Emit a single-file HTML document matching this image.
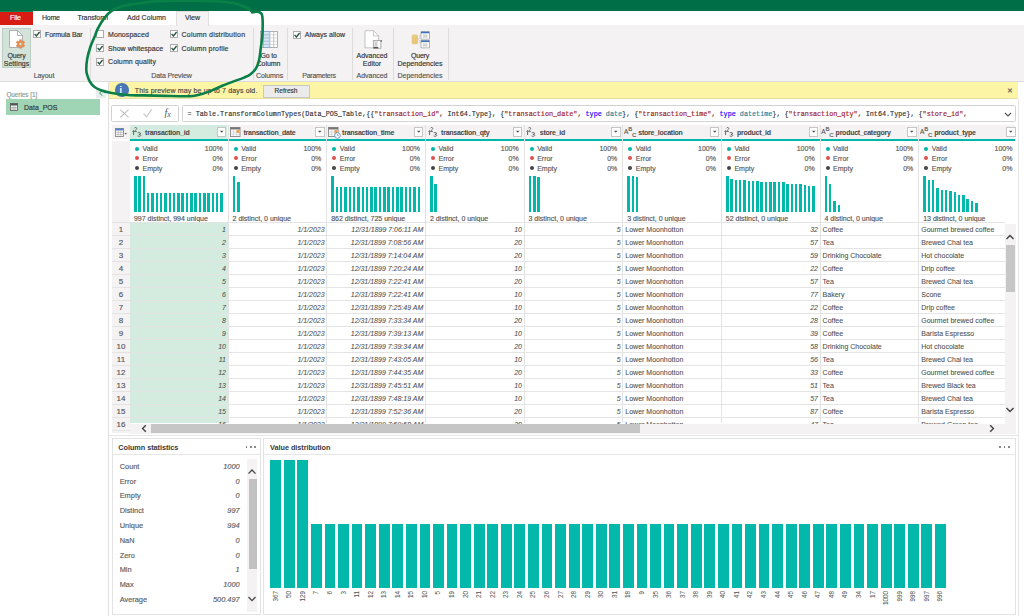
<!DOCTYPE html><html><head><meta charset="utf-8"><style>
*{margin:0;padding:0;box-sizing:border-box}
html,body{width:1024px;height:616px;overflow:hidden;background:#fff;font-family:"Liberation Sans",sans-serif;color:#333}
.ab{position:absolute}
.t{position:absolute;white-space:nowrap;line-height:1;-webkit-text-stroke:0.15px currentColor}
</style></head><body>
<div class="ab" style="left:0;top:0;width:1024px;height:616px;overflow:hidden">
<div class="ab" style="left:0;top:0;width:1024px;height:11px;background:#006e47"></div><div class="ab" style="left:0;top:11px;width:33px;height:1px;background:#0f8352"></div><div class="ab" style="left:33px;top:11px;width:991px;height:14px;background:#fff"></div><div class="ab" style="left:0;top:12px;width:33px;height:12.6px;background:#d71c14"></div><div class="t" style="left:10px;top:14.30px;font-size:7px;color:#fff;font-weight:normal;font-style:normal;letter-spacing:-0.094px;">File</div><div class="t" style="left:42px;top:14.30px;font-size:7px;color:#333;font-weight:normal;font-style:normal;letter-spacing:-0.229px;">Home</div><div class="t" style="left:77.5px;top:14.30px;font-size:7px;color:#333;font-weight:normal;font-style:normal;letter-spacing:-0.118px;">Transform</div><div class="t" style="left:127px;top:14.30px;font-size:7px;color:#333;font-weight:normal;font-style:normal;letter-spacing:0.052px;">Add Column</div><div class="ab" style="left:0;top:25px;width:1024px;height:57px;background:#f4f2f3;border-bottom:1px solid #dcdcdc"></div><div class="ab" style="left:176px;top:11px;width:33px;height:15px;background:#f4f2f3;border:1px solid #e1dfdd;border-bottom:none"></div><div class="t" style="left:185px;top:14.30px;font-size:7px;color:#333;font-weight:normal;font-style:normal;">View</div><div class="ab" style="left:2px;top:28px;width:29px;height:40px;background:#d3e3da;border:1px solid #b9cfc3"></div><svg class="ab" style="left:8px;top:30px" width="18" height="20" viewBox="0 0 18 20">
<path d="M1.5 0.5 H9.5 L14.5 5.5 V17.5 H1.5 Z" fill="#fff" stroke="#a0a0a0" stroke-width="0.8"/>
<path d="M9.5 0.5 V5.5 H14.5" fill="none" stroke="#a0a0a0" stroke-width="0.8"/>
<g transform="translate(12.5,14)" fill="#e3904f"><circle r="3.2"/><rect x="-1.3" y="-4.6" width="2.6" height="9.2"/><rect x="-1.3" y="-4.6" width="2.6" height="9.2" transform="rotate(60)"/><rect x="-1.3" y="-4.6" width="2.6" height="9.2" transform="rotate(-60)"/><circle r="1.2" fill="#d3e3da"/></g>
</svg><div class="t" style="left:-83.5px;width:200px;top:51.70px;font-size:7px;color:#333;font-weight:normal;font-style:normal;text-align:center;letter-spacing:-0.216px;">Query</div><div class="t" style="left:-83.5px;width:200px;top:59.70px;font-size:7px;color:#333;font-weight:normal;font-style:normal;text-align:center;letter-spacing:0.043px;">Settings</div><div class="ab" style="left:33px;top:30px;width:8px;height:8px;background:#fff;border:1px solid #acacac"></div><svg class="ab" style="left:33px;top:30px" width="8" height="8" viewBox="0 0 8 8"><path d="M1.6 4.1 L3.4 5.9 L6.6 2" fill="none" stroke="#24503c" stroke-width="1.35"/></svg><div class="t" style="left:45px;top:31.00px;font-size:7px;color:#333;font-weight:normal;font-style:normal;letter-spacing:-0.082px;">Formula Bar</div><div class="t" style="left:-56px;width:200px;top:72.20px;font-size:7px;color:#555;font-weight:normal;font-style:normal;text-align:center;letter-spacing:-0.066px;">Layout</div><div class="ab" style="left:90px;top:28px;width:1px;height:52px;background:#dedcdb"></div><div class="ab" style="left:96px;top:30px;width:8px;height:8px;background:#fff;border:1px solid #acacac"></div><div class="t" style="left:108px;top:31.00px;font-size:7px;color:#333;font-weight:normal;font-style:normal;letter-spacing:0.078px;">Monospaced</div><div class="ab" style="left:96px;top:44px;width:8px;height:8px;background:#fff;border:1px solid #acacac"></div><svg class="ab" style="left:96px;top:44px" width="8" height="8" viewBox="0 0 8 8"><path d="M1.6 4.1 L3.4 5.9 L6.6 2" fill="none" stroke="#24503c" stroke-width="1.35"/></svg><div class="t" style="left:108px;top:44.50px;font-size:7px;color:#333;font-weight:normal;font-style:normal;letter-spacing:0.044px;">Show whitespace</div><div class="ab" style="left:96px;top:57.5px;width:8px;height:8px;background:#fff;border:1px solid #acacac"></div><svg class="ab" style="left:96px;top:57.5px" width="8" height="8" viewBox="0 0 8 8"><path d="M1.6 4.1 L3.4 5.9 L6.6 2" fill="none" stroke="#24503c" stroke-width="1.35"/></svg><div class="t" style="left:108px;top:58.20px;font-size:7px;color:#333;font-weight:normal;font-style:normal;letter-spacing:0.122px;">Column quality</div><div class="ab" style="left:169.5px;top:30px;width:8px;height:8px;background:#fff;border:1px solid #acacac"></div><svg class="ab" style="left:169.5px;top:30px" width="8" height="8" viewBox="0 0 8 8"><path d="M1.6 4.1 L3.4 5.9 L6.6 2" fill="none" stroke="#24503c" stroke-width="1.35"/></svg><div class="t" style="left:181.6px;top:31.00px;font-size:7px;color:#333;font-weight:normal;font-style:normal;letter-spacing:0.199px;">Column distribution</div><div class="ab" style="left:169.5px;top:44px;width:8px;height:8px;background:#fff;border:1px solid #acacac"></div><svg class="ab" style="left:169.5px;top:44px" width="8" height="8" viewBox="0 0 8 8"><path d="M1.6 4.1 L3.4 5.9 L6.6 2" fill="none" stroke="#24503c" stroke-width="1.35"/></svg><div class="t" style="left:181.6px;top:44.50px;font-size:7px;color:#333;font-weight:normal;font-style:normal;letter-spacing:0.135px;">Column profile</div><div class="t" style="left:71.5px;width:200px;top:72.30px;font-size:7px;color:#555;font-weight:normal;font-style:normal;text-align:center;letter-spacing:-0.113px;">Data Preview</div><div class="ab" style="left:253px;top:28px;width:1px;height:52px;background:#dedcdb"></div><svg class="ab" style="left:260px;top:31px" width="18" height="17" viewBox="0 0 18 17">
<rect x="0.5" y="0.5" width="17" height="16" fill="#fff" stroke="#a0a0a0" stroke-width="0.8"/>
<rect x="3.5" y="0.5" width="6.3" height="16" fill="#d6e4f4" stroke="#7fa6d8" stroke-width="0.8"/>
<path d="M0.5 3.75 H17.5 M0.5 7 H17.5 M0.5 10.25 H17.5 M0.5 13.5 H17.5" stroke="#c8c8c8" stroke-width="0.7"/>
<path d="M3.5 3.75 H9.8 M3.5 7 H9.8 M3.5 10.25 H9.8 M3.5 13.5 H9.8" stroke="#9dbbe2" stroke-width="0.7"/>
<path d="M13.7 0.5 V16.5" stroke="#b0b0b0" stroke-width="0.7"/>
</svg><div class="t" style="left:168.5px;width:200px;top:52.00px;font-size:7px;color:#333;font-weight:normal;font-style:normal;text-align:center;letter-spacing:-0.181px;">Go to</div><div class="t" style="left:168.5px;width:200px;top:59.90px;font-size:7px;color:#333;font-weight:normal;font-style:normal;text-align:center;letter-spacing:-0.065px;">Column</div><div class="t" style="left:169.5px;width:200px;top:72.20px;font-size:7px;color:#555;font-weight:normal;font-style:normal;text-align:center;letter-spacing:-0.054px;">Columns</div><div class="ab" style="left:287px;top:28px;width:1px;height:52px;background:#dedcdb"></div><div class="ab" style="left:292.5px;top:30.5px;width:8px;height:8px;background:#fff;border:1px solid #acacac"></div><svg class="ab" style="left:292.5px;top:30.5px" width="8" height="8" viewBox="0 0 8 8"><path d="M1.6 4.1 L3.4 5.9 L6.6 2" fill="none" stroke="#24503c" stroke-width="1.35"/></svg><div class="t" style="left:304.7px;top:31.00px;font-size:7px;color:#333;font-weight:normal;font-style:normal;letter-spacing:0.038px;">Always allow</div><div class="t" style="left:219px;width:200px;top:72.20px;font-size:7px;color:#555;font-weight:normal;font-style:normal;text-align:center;letter-spacing:-0.287px;">Parameters</div><div class="ab" style="left:352px;top:28px;width:1px;height:52px;background:#dedcdb"></div><svg class="ab" style="left:364px;top:30px" width="20" height="20" viewBox="0 0 20 20">
<path d="M1 0.7 H9.5 L14.7 5.9 V17.8 H1 Z" fill="#fff" stroke="#b4b4b4" stroke-width="0.8"/>
<path d="M9.5 0.7 V5.9 H14.7" fill="none" stroke="#b4b4b4" stroke-width="0.7"/>
<rect x="9.3" y="10.6" width="7.6" height="7.6" fill="#fff" stroke="#9a9a9a" stroke-width="0.8"/>
<rect x="10.3" y="11.3" width="3.2" height="5.6" fill="#d0d0d0"/>
<rect x="9.6" y="17" width="4.6" height="1.4" fill="#555"/>
<rect x="16.6" y="10.3" width="1.2" height="1.4" fill="#444"/>
</svg><div class="t" style="left:272px;width:200px;top:52.00px;font-size:7px;color:#333;font-weight:normal;font-style:normal;text-align:center;letter-spacing:-0.034px;">Advanced</div><div class="t" style="left:272px;width:200px;top:59.90px;font-size:7px;color:#333;font-weight:normal;font-style:normal;text-align:center;">Editor</div><div class="t" style="left:272px;width:200px;top:72.20px;font-size:7px;color:#555;font-weight:normal;font-style:normal;text-align:center;letter-spacing:-0.034px;">Advanced</div><div class="ab" style="left:393px;top:28px;width:1px;height:52px;background:#dedcdb"></div><svg class="ab" style="left:411px;top:30.5px" width="20" height="18" viewBox="0 0 20 18">
<path d="M0.7 4.8 Q0.7 3.6 3.9 3.6 Q7.1 3.6 7.1 4.8 V12 Q7.1 13.2 3.9 13.2 Q0.7 13.2 0.7 12 Z" fill="#e8c77c"/>
<path d="M0.7 4.8 Q3.9 6 7.1 4.8" fill="none" stroke="#f3dfaa" stroke-width="0.5"/>
<path d="M7.3 8.5 Q8.5 8.5 9 5 Q9.3 4 10 4 M7.3 8.5 Q8.5 8.5 9 12 Q9.3 13 10 13" fill="none" stroke="#c5c5c5" stroke-width="0.6"/>
<rect x="10" y="0.7" width="8.3" height="7.4" fill="#fff" stroke="#8c8c8c" stroke-width="0.6"/>
<rect x="10" y="0.7" width="8.3" height="1.6" fill="#3d72b8"/>
<path d="M11.8 4.2 H16.5 M11.8 6 H16.5" stroke="#8c8c8c" stroke-width="0.6"/>
<rect x="10" y="9.5" width="8.3" height="7.4" fill="#fff" stroke="#8c8c8c" stroke-width="0.6"/>
<rect x="10" y="9.5" width="8.3" height="1.6" fill="#3d72b8"/>
<path d="M11.8 13 H16.5 M11.8 14.8 H16.5" stroke="#8c8c8c" stroke-width="0.6"/>
</svg><div class="t" style="left:320px;width:200px;top:52.00px;font-size:7px;color:#333;font-weight:normal;font-style:normal;text-align:center;letter-spacing:-0.216px;">Query</div><div class="t" style="left:320px;width:200px;top:59.90px;font-size:7px;color:#333;font-weight:normal;font-style:normal;text-align:center;letter-spacing:0.03px;">Dependencies</div><div class="t" style="left:320px;width:200px;top:72.20px;font-size:7px;color:#555;font-weight:normal;font-style:normal;text-align:center;letter-spacing:0.03px;">Dependencies</div><div class="ab" style="left:448px;top:28px;width:1px;height:52px;background:#dedcdb"></div><div class="ab" style="left:108px;top:82px;width:1px;height:534px;background:#e1dfdd"></div><div class="t" style="left:6.4px;top:92.25px;font-size:6.3px;color:#7f9a90;font-weight:normal;font-style:normal;">Queries [1]</div><div class="ab" style="left:96px;top:88.5px;width:9.7px;height:9px;background:#e9eeec"></div><svg class="ab" style="left:96px;top:89px" width="10" height="8" viewBox="0 0 10 8"><path d="M6.3 1.3 L3.6 4 L6.3 6.7" fill="none" stroke="#62b58c" stroke-width="1.1"/></svg><div class="ab" style="left:6px;top:99px;width:94px;height:15.5px;background:#9fd5b5"></div><svg class="ab" style="left:10px;top:103px" width="8" height="8" viewBox="0 0 8 8"><rect x="0.5" y="0.5" width="7" height="7" fill="#fff" stroke="#555" stroke-width="0.8"/><rect x="0.5" y="0.5" width="7" height="2" fill="#555"/><path d="M0.5 4.5 H7.5 M0.5 6 H7.5 M3 2.5 V7.5 M5 2.5 V7.5" stroke="#888" stroke-width="0.5"/></svg><div class="t" style="left:24px;top:104.00px;font-size:7px;color:#333;font-weight:normal;font-style:normal;">Data_POS</div><div class="ab" style="left:109px;top:82px;width:909px;height:17px;background:#fcf5a6;border-bottom:1px solid #e8e0a0"></div><div class="ab" style="left:115.4px;top:83.4px;width:13.4px;height:13.4px;border-radius:50%;background:#4a76b5"></div><div class="t" style="left:119.5px;top:86.00px;font-size:9px;color:#fff;font-weight:bold;font-style:normal;-webkit-text-stroke:0;">i</div><div class="t" style="left:134.8px;top:87.40px;font-size:7px;color:#444;font-weight:normal;font-style:normal;letter-spacing:0.14px">This preview may be up to 7 days old.</div><div class="ab" style="left:262.5px;top:84.5px;width:47px;height:13px;background:#ebebeb;border:1px solid #c8c8c8"></div><div class="t" style="left:186px;width:200px;top:87.75px;font-size:6.5px;color:#333;font-weight:normal;font-style:normal;text-align:center;">Refresh</div><div class="t" style="left:1006.5px;top:87.30px;font-size:7px;color:#666;font-weight:bold;font-style:normal;-webkit-text-stroke:0;">&#x2715;</div><div class="ab" style="left:111px;top:105px;width:68px;height:17px;background:#fff;border:1px solid #d2d2d2;border-radius:1.5px"></div><svg class="ab" style="left:118px;top:108px" width="60" height="12" viewBox="0 0 60 12"><path d="M2.3 1.6 L10.5 9.3 M10.5 1.6 L2.3 9.3" stroke="#bdbdbd" stroke-width="1.05"/><path d="M25.6 5.6 L28.6 8.9 L33.8 1.3" stroke="#c4c4c4" stroke-width="1.1" fill="none"/></svg><div class="t" style="left:164.5px;top:108.20px;font-size:10px;color:#555;font-weight:normal;font-style:italic;font-family:'Liberation Serif',serif;-webkit-text-stroke:0">f<span style="font-size:8px;position:relative;top:0.5px">x</span></div><div class="ab" style="left:182px;top:105px;width:833.5px;height:17px;background:#fff;border:1px solid #d2d2d2;border-radius:1.5px"></div><div class="t" style="left:187.6px;top:110.91px;font-size:6.77px;color:#333;font-weight:normal;font-style:normal;font-family:'Liberation Mono',monospace">= Table.TransformColumnTypes(Data_POS_Table,{{<span style="color:#a31515">"transaction_id"</span>, Int64.Type}, {<span style="color:#a31515">"transaction_date"</span>, <span style="color:#0000ff">type</span> <span style="color:#267f99">date</span>}, {<span style="color:#a31515">"transaction_time"</span>, <span style="color:#0000ff">type</span> <span style="color:#267f99">datetime</span>}, {<span style="color:#a31515">"transaction_qty"</span>, Int64.Type}, {<span style="color:#a31515">"store_id"</span>,</div><svg class="ab" style="left:1003.5px;top:110.5px" width="8" height="7" viewBox="0 0 8 7"><path d="M1 2 L4 5 L7 2" fill="none" stroke="#555" stroke-width="1.2"/></svg><div class="ab" style="left:112px;top:125px;width:904px;height:309px;background:#fff"></div><div class="ab" style="left:112px;top:125px;width:903px;height:13.5px;background:#f4f2f3"></div><div class="ab" style="left:129.5px;top:125px;width:97.66px;height:13.5px;background:#d3ecdf"></div><div class="ab" style="left:129.5px;top:138.5px;width:885.5px;height:2.5px;background:#01b8aa"></div><svg class="ab" style="left:115px;top:127.5px" width="13" height="9" viewBox="0 0 13 9"><rect x="0.5" y="0.5" width="8" height="8" fill="#fff" stroke="#7a7a7a" stroke-width="0.8"/><rect x="0.5" y="0.5" width="8" height="2" fill="#5b82c2"/><path d="M0.5 4.5 H8.5 M0.5 6.5 H8.5 M3.2 2.5 V8.5 M5.8 2.5 V8.5" stroke="#999" stroke-width="0.5"/><path d="M9.5 5 L12 5 L10.75 6.5 Z" fill="#555"/></svg><div class="ab" style="left:112px;top:141px;width:17.5px;height:292px;background:#f4f2f3"></div><div class="ab" style="left:129.5px;top:223px;width:98.16px;height:200px;background:#d3ecdf"></div><div class="ab" style="left:228px;top:125px;width:1px;height:298px;background:#e3e3e3"></div><svg class="ab" style="left:131.70px;top:126.8px" width="10" height="10" viewBox="0 0 10 10"><path d="M0.5 4.5 L1.6 3.5 V8" fill="none" stroke="#555" stroke-width="0.9"/><path d="M2.4 1.3 Q2.7 0.5 3.6 0.5 Q4.7 0.5 4.7 1.5 Q4.7 2.3 2.4 4.5 H4.9" fill="none" stroke="#555" stroke-width="0.8"/><path d="M5.6 5.9 Q6.2 5.5 7.1 5.5 Q8.6 5.5 8.6 6.4 Q8.6 7.3 6.9 7.3 Q8.8 7.3 8.8 8.3 Q8.8 9.3 7.1 9.3 Q6.1 9.3 5.5 8.9" fill="none" stroke="#555" stroke-width="0.8"/></svg><div class="t" style="left:145.1px;top:128.50px;font-size:7px;color:#454545;font-weight:bold;font-style:normal;-webkit-text-stroke:0;letter-spacing:-0.25px">transaction_id</div><div class="ab" style="left:216.66px;top:127.3px;width:9.5px;height:9.3px;background:#fff;border:1px solid #c6c6c6"></div><svg class="ab" style="left:216.66px;top:127.3px" width="9.5" height="9.3" viewBox="0 0 9.5 9.3"><path d="M2.9 3.7 H6.6 L4.75 5.7 Z" fill="#555"/></svg><div class="ab" style="left:134.90px;top:146.60px;width:4px;height:4px;border-radius:50%;background:#01b8aa"></div><div class="t" style="left:142.5px;top:145.10px;font-size:7px;color:#5a5a5a;font-weight:normal;font-style:normal;">Valid</div><div class="t" style="right:801.34px;top:145.10px;font-size:7px;color:#5a5a5a;font-weight:normal;font-style:normal;text-align:right;">100%</div><div class="ab" style="left:134.90px;top:156.40px;width:4px;height:4px;border-radius:50%;background:#e0504f"></div><div class="t" style="left:142.5px;top:154.90px;font-size:7px;color:#5a5a5a;font-weight:normal;font-style:normal;">Error</div><div class="t" style="right:801.34px;top:154.90px;font-size:7px;color:#5a5a5a;font-weight:normal;font-style:normal;text-align:right;">0%</div><div class="ab" style="left:134.90px;top:166.20px;width:4px;height:4px;border-radius:50%;background:#444"></div><div class="t" style="left:142.5px;top:164.70px;font-size:7px;color:#5a5a5a;font-weight:normal;font-style:normal;">Empty</div><div class="t" style="right:801.34px;top:164.70px;font-size:7px;color:#5a5a5a;font-weight:normal;font-style:normal;text-align:right;">0%</div><div class="ab" style="left:134.05px;top:176.00px;width:2.5px;height:36.30px;background:#01b8aa"></div><div class="ab" style="left:138.36px;top:176.00px;width:2.5px;height:36.30px;background:#01b8aa"></div><div class="ab" style="left:142.67px;top:176.00px;width:2.5px;height:36.30px;background:#01b8aa"></div><div class="ab" style="left:146.98px;top:193.20px;width:2.5px;height:19.10px;background:#01b8aa"></div><div class="ab" style="left:151.29px;top:193.20px;width:2.5px;height:19.10px;background:#01b8aa"></div><div class="ab" style="left:155.60px;top:193.20px;width:2.5px;height:19.10px;background:#01b8aa"></div><div class="ab" style="left:159.91px;top:193.20px;width:2.5px;height:19.10px;background:#01b8aa"></div><div class="ab" style="left:164.22px;top:193.20px;width:2.5px;height:19.10px;background:#01b8aa"></div><div class="ab" style="left:168.53px;top:193.20px;width:2.5px;height:19.10px;background:#01b8aa"></div><div class="ab" style="left:172.84px;top:193.20px;width:2.5px;height:19.10px;background:#01b8aa"></div><div class="ab" style="left:177.15px;top:193.20px;width:2.5px;height:19.10px;background:#01b8aa"></div><div class="ab" style="left:181.46px;top:193.20px;width:2.5px;height:19.10px;background:#01b8aa"></div><div class="ab" style="left:185.77px;top:193.20px;width:2.5px;height:19.10px;background:#01b8aa"></div><div class="ab" style="left:190.08px;top:193.20px;width:2.5px;height:19.10px;background:#01b8aa"></div><div class="ab" style="left:194.39px;top:193.20px;width:2.5px;height:19.10px;background:#01b8aa"></div><div class="ab" style="left:198.70px;top:193.20px;width:2.5px;height:19.10px;background:#01b8aa"></div><div class="ab" style="left:203.01px;top:193.20px;width:2.5px;height:19.10px;background:#01b8aa"></div><div class="ab" style="left:207.32px;top:193.20px;width:2.5px;height:19.10px;background:#01b8aa"></div><div class="ab" style="left:211.63px;top:193.20px;width:2.5px;height:19.10px;background:#01b8aa"></div><div class="ab" style="left:215.94px;top:193.20px;width:2.5px;height:19.10px;background:#01b8aa"></div><div class="ab" style="left:220.25px;top:193.20px;width:2.5px;height:19.10px;background:#01b8aa"></div><div class="t" style="left:133.9px;top:214.80px;font-size:7px;color:#555;font-weight:normal;font-style:normal;">997 distinct, 994 unique</div><div class="ab" style="left:326px;top:125px;width:1px;height:298px;background:#e3e3e3"></div><svg class="ab" style="left:229.66px;top:126.5px" width="13" height="12" viewBox="0 0 13 12"><rect x="0.5" y="0.5" width="9.5" height="9" fill="#fff" stroke="#777" stroke-width="0.8"/><rect x="0.5" y="0.5" width="9.5" height="2" fill="#777"/><path d="M0.5 5 H10 M0.5 7.2 H10 M3.6 2.5 V9.5 M6.8 2.5 V9.5" stroke="#bbb" stroke-width="0.5"/><rect x="6.5" y="3.2" width="2.8" height="2.6" fill="#ef9a3e"/></svg><div class="t" style="left:243.46px;top:128.50px;font-size:7px;color:#454545;font-weight:bold;font-style:normal;-webkit-text-stroke:0;letter-spacing:-0.25px">transaction_date</div><div class="ab" style="left:315.32px;top:127.3px;width:9.5px;height:9.3px;background:#fff;border:1px solid #c6c6c6"></div><svg class="ab" style="left:315.32px;top:127.3px" width="9.5" height="9.3" viewBox="0 0 9.5 9.3"><path d="M2.9 3.7 H6.6 L4.75 5.7 Z" fill="#555"/></svg><div class="ab" style="left:233.56px;top:146.60px;width:4px;height:4px;border-radius:50%;background:#01b8aa"></div><div class="t" style="left:241.16px;top:145.10px;font-size:7px;color:#5a5a5a;font-weight:normal;font-style:normal;">Valid</div><div class="t" style="right:702.6800000000001px;top:145.10px;font-size:7px;color:#5a5a5a;font-weight:normal;font-style:normal;text-align:right;">100%</div><div class="ab" style="left:233.56px;top:156.40px;width:4px;height:4px;border-radius:50%;background:#e0504f"></div><div class="t" style="left:241.16px;top:154.90px;font-size:7px;color:#5a5a5a;font-weight:normal;font-style:normal;">Error</div><div class="t" style="right:702.6800000000001px;top:154.90px;font-size:7px;color:#5a5a5a;font-weight:normal;font-style:normal;text-align:right;">0%</div><div class="ab" style="left:233.56px;top:166.20px;width:4px;height:4px;border-radius:50%;background:#444"></div><div class="t" style="left:241.16px;top:164.70px;font-size:7px;color:#5a5a5a;font-weight:normal;font-style:normal;">Empty</div><div class="t" style="right:702.6800000000001px;top:164.70px;font-size:7px;color:#5a5a5a;font-weight:normal;font-style:normal;text-align:right;">0%</div><div class="ab" style="left:232.71px;top:176.25px;width:2.5px;height:36.05px;background:#01b8aa"></div><div class="ab" style="left:237.02px;top:181.70px;width:2.5px;height:30.60px;background:#01b8aa"></div><div class="t" style="left:232.56px;top:214.80px;font-size:7px;color:#555;font-weight:normal;font-style:normal;">2 distinct, 0 unique</div><div class="ab" style="left:425px;top:125px;width:1px;height:298px;background:#e3e3e3"></div><svg class="ab" style="left:328.32px;top:126.5px" width="13" height="12" viewBox="0 0 13 12"><rect x="0.5" y="0.5" width="9.5" height="9" fill="#fff" stroke="#777" stroke-width="0.8"/><rect x="0.5" y="0.5" width="9.5" height="2" fill="#777"/><path d="M0.5 5 H10 M0.5 7.2 H10 M3.6 2.5 V9.5 M6.8 2.5 V9.5" stroke="#bbb" stroke-width="0.5"/><rect x="6.5" y="3.2" width="2.8" height="2.6" fill="#ef9a3e"/><circle cx="9.5" cy="8.5" r="2.8" fill="#fff" stroke="#4d88d0" stroke-width="0.8"/><path d="M9.5 7 V8.6 H10.8" stroke="#4d88d0" stroke-width="0.6" fill="none"/></svg><div class="t" style="left:342.12px;top:128.50px;font-size:7px;color:#454545;font-weight:bold;font-style:normal;-webkit-text-stroke:0;letter-spacing:-0.25px">transaction_time</div><div class="ab" style="left:413.98px;top:127.3px;width:9.5px;height:9.3px;background:#fff;border:1px solid #c6c6c6"></div><svg class="ab" style="left:413.98px;top:127.3px" width="9.5" height="9.3" viewBox="0 0 9.5 9.3"><path d="M2.9 3.7 H6.6 L4.75 5.7 Z" fill="#555"/></svg><div class="ab" style="left:332.22px;top:146.60px;width:4px;height:4px;border-radius:50%;background:#01b8aa"></div><div class="t" style="left:339.82px;top:145.10px;font-size:7px;color:#5a5a5a;font-weight:normal;font-style:normal;">Valid</div><div class="t" style="right:604.02px;top:145.10px;font-size:7px;color:#5a5a5a;font-weight:normal;font-style:normal;text-align:right;">100%</div><div class="ab" style="left:332.22px;top:156.40px;width:4px;height:4px;border-radius:50%;background:#e0504f"></div><div class="t" style="left:339.82px;top:154.90px;font-size:7px;color:#5a5a5a;font-weight:normal;font-style:normal;">Error</div><div class="t" style="right:604.02px;top:154.90px;font-size:7px;color:#5a5a5a;font-weight:normal;font-style:normal;text-align:right;">0%</div><div class="ab" style="left:332.22px;top:166.20px;width:4px;height:4px;border-radius:50%;background:#444"></div><div class="t" style="left:339.82px;top:164.70px;font-size:7px;color:#5a5a5a;font-weight:normal;font-style:normal;">Empty</div><div class="t" style="right:604.02px;top:164.70px;font-size:7px;color:#5a5a5a;font-weight:normal;font-style:normal;text-align:right;">0%</div><div class="ab" style="left:331.37px;top:176.25px;width:2.5px;height:36.05px;background:#01b8aa"></div><div class="ab" style="left:335.68px;top:187.20px;width:2.5px;height:25.10px;background:#01b8aa"></div><div class="ab" style="left:339.99px;top:187.20px;width:2.5px;height:25.10px;background:#01b8aa"></div><div class="ab" style="left:344.30px;top:187.20px;width:2.5px;height:25.10px;background:#01b8aa"></div><div class="ab" style="left:348.61px;top:187.20px;width:2.5px;height:25.10px;background:#01b8aa"></div><div class="ab" style="left:352.92px;top:187.20px;width:2.5px;height:25.10px;background:#01b8aa"></div><div class="ab" style="left:357.23px;top:187.20px;width:2.5px;height:25.10px;background:#01b8aa"></div><div class="ab" style="left:361.54px;top:187.20px;width:2.5px;height:25.10px;background:#01b8aa"></div><div class="ab" style="left:365.85px;top:187.20px;width:2.5px;height:25.10px;background:#01b8aa"></div><div class="ab" style="left:370.16px;top:187.20px;width:2.5px;height:25.10px;background:#01b8aa"></div><div class="ab" style="left:374.47px;top:187.20px;width:2.5px;height:25.10px;background:#01b8aa"></div><div class="ab" style="left:378.78px;top:187.20px;width:2.5px;height:25.10px;background:#01b8aa"></div><div class="ab" style="left:383.09px;top:187.20px;width:2.5px;height:25.10px;background:#01b8aa"></div><div class="ab" style="left:387.40px;top:187.20px;width:2.5px;height:25.10px;background:#01b8aa"></div><div class="ab" style="left:391.71px;top:187.20px;width:2.5px;height:25.10px;background:#01b8aa"></div><div class="ab" style="left:396.02px;top:187.20px;width:2.5px;height:25.10px;background:#01b8aa"></div><div class="ab" style="left:400.33px;top:187.20px;width:2.5px;height:25.10px;background:#01b8aa"></div><div class="ab" style="left:404.64px;top:187.20px;width:2.5px;height:25.10px;background:#01b8aa"></div><div class="ab" style="left:408.95px;top:187.20px;width:2.5px;height:25.10px;background:#01b8aa"></div><div class="ab" style="left:413.26px;top:187.20px;width:2.5px;height:25.10px;background:#01b8aa"></div><div class="ab" style="left:417.57px;top:187.20px;width:2.5px;height:25.10px;background:#01b8aa"></div><div class="t" style="left:331.21999999999997px;top:214.80px;font-size:7px;color:#555;font-weight:normal;font-style:normal;">862 distinct, 725 unique</div><div class="ab" style="left:524px;top:125px;width:1px;height:298px;background:#e3e3e3"></div><svg class="ab" style="left:427.68px;top:126.8px" width="10" height="10" viewBox="0 0 10 10"><path d="M0.5 4.5 L1.6 3.5 V8" fill="none" stroke="#555" stroke-width="0.9"/><path d="M2.4 1.3 Q2.7 0.5 3.6 0.5 Q4.7 0.5 4.7 1.5 Q4.7 2.3 2.4 4.5 H4.9" fill="none" stroke="#555" stroke-width="0.8"/><path d="M5.6 5.9 Q6.2 5.5 7.1 5.5 Q8.6 5.5 8.6 6.4 Q8.6 7.3 6.9 7.3 Q8.8 7.3 8.8 8.3 Q8.8 9.3 7.1 9.3 Q6.1 9.3 5.5 8.9" fill="none" stroke="#555" stroke-width="0.8"/></svg><div class="t" style="left:441.08000000000004px;top:128.50px;font-size:7px;color:#454545;font-weight:bold;font-style:normal;-webkit-text-stroke:0;letter-spacing:-0.25px">transaction_qty</div><div class="ab" style="left:512.64px;top:127.3px;width:9.5px;height:9.3px;background:#fff;border:1px solid #c6c6c6"></div><svg class="ab" style="left:512.64px;top:127.3px" width="9.5" height="9.3" viewBox="0 0 9.5 9.3"><path d="M2.9 3.7 H6.6 L4.75 5.7 Z" fill="#555"/></svg><div class="ab" style="left:430.88px;top:146.60px;width:4px;height:4px;border-radius:50%;background:#01b8aa"></div><div class="t" style="left:438.48px;top:145.10px;font-size:7px;color:#5a5a5a;font-weight:normal;font-style:normal;">Valid</div><div class="t" style="right:505.36px;top:145.10px;font-size:7px;color:#5a5a5a;font-weight:normal;font-style:normal;text-align:right;">100%</div><div class="ab" style="left:430.88px;top:156.40px;width:4px;height:4px;border-radius:50%;background:#e0504f"></div><div class="t" style="left:438.48px;top:154.90px;font-size:7px;color:#5a5a5a;font-weight:normal;font-style:normal;">Error</div><div class="t" style="right:505.36px;top:154.90px;font-size:7px;color:#5a5a5a;font-weight:normal;font-style:normal;text-align:right;">0%</div><div class="ab" style="left:430.88px;top:166.20px;width:4px;height:4px;border-radius:50%;background:#444"></div><div class="t" style="left:438.48px;top:164.70px;font-size:7px;color:#5a5a5a;font-weight:normal;font-style:normal;">Empty</div><div class="t" style="right:505.36px;top:164.70px;font-size:7px;color:#5a5a5a;font-weight:normal;font-style:normal;text-align:right;">0%</div><div class="ab" style="left:430.03px;top:176.25px;width:2.5px;height:36.05px;background:#01b8aa"></div><div class="ab" style="left:434.34px;top:184.00px;width:2.5px;height:28.30px;background:#01b8aa"></div><div class="t" style="left:429.88px;top:214.80px;font-size:7px;color:#555;font-weight:normal;font-style:normal;">2 distinct, 0 unique</div><div class="ab" style="left:622px;top:125px;width:1px;height:298px;background:#e3e3e3"></div><svg class="ab" style="left:526.34px;top:126.8px" width="10" height="10" viewBox="0 0 10 10"><path d="M0.5 4.5 L1.6 3.5 V8" fill="none" stroke="#555" stroke-width="0.9"/><path d="M2.4 1.3 Q2.7 0.5 3.6 0.5 Q4.7 0.5 4.7 1.5 Q4.7 2.3 2.4 4.5 H4.9" fill="none" stroke="#555" stroke-width="0.8"/><path d="M5.6 5.9 Q6.2 5.5 7.1 5.5 Q8.6 5.5 8.6 6.4 Q8.6 7.3 6.9 7.3 Q8.8 7.3 8.8 8.3 Q8.8 9.3 7.1 9.3 Q6.1 9.3 5.5 8.9" fill="none" stroke="#555" stroke-width="0.8"/></svg><div class="t" style="left:539.74px;top:128.50px;font-size:7px;color:#454545;font-weight:bold;font-style:normal;-webkit-text-stroke:0;letter-spacing:-0.25px">store_id</div><div class="ab" style="left:611.30px;top:127.3px;width:9.5px;height:9.3px;background:#fff;border:1px solid #c6c6c6"></div><svg class="ab" style="left:611.30px;top:127.3px" width="9.5" height="9.3" viewBox="0 0 9.5 9.3"><path d="M2.9 3.7 H6.6 L4.75 5.7 Z" fill="#555"/></svg><div class="ab" style="left:529.54px;top:146.60px;width:4px;height:4px;border-radius:50%;background:#01b8aa"></div><div class="t" style="left:537.14px;top:145.10px;font-size:7px;color:#5a5a5a;font-weight:normal;font-style:normal;">Valid</div><div class="t" style="right:406.70000000000005px;top:145.10px;font-size:7px;color:#5a5a5a;font-weight:normal;font-style:normal;text-align:right;">100%</div><div class="ab" style="left:529.54px;top:156.40px;width:4px;height:4px;border-radius:50%;background:#e0504f"></div><div class="t" style="left:537.14px;top:154.90px;font-size:7px;color:#5a5a5a;font-weight:normal;font-style:normal;">Error</div><div class="t" style="right:406.70000000000005px;top:154.90px;font-size:7px;color:#5a5a5a;font-weight:normal;font-style:normal;text-align:right;">0%</div><div class="ab" style="left:529.54px;top:166.20px;width:4px;height:4px;border-radius:50%;background:#444"></div><div class="t" style="left:537.14px;top:164.70px;font-size:7px;color:#5a5a5a;font-weight:normal;font-style:normal;">Empty</div><div class="t" style="right:406.70000000000005px;top:164.70px;font-size:7px;color:#5a5a5a;font-weight:normal;font-style:normal;text-align:right;">0%</div><div class="ab" style="left:528.69px;top:176.25px;width:2.5px;height:36.05px;background:#01b8aa"></div><div class="ab" style="left:533.00px;top:176.25px;width:2.5px;height:36.05px;background:#01b8aa"></div><div class="ab" style="left:537.31px;top:177.00px;width:2.5px;height:35.30px;background:#01b8aa"></div><div class="t" style="left:528.54px;top:214.80px;font-size:7px;color:#555;font-weight:normal;font-style:normal;">3 distinct, 0 unique</div><div class="ab" style="left:721px;top:125px;width:1px;height:298px;background:#e3e3e3"></div><div class="t" style="left:624.00px;top:129.2px;font-size:6.5px;color:#555">A</div><div class="t" style="left:628.20px;top:126.4px;font-size:6px;color:#555">B</div><div class="t" style="left:632.00px;top:131.6px;font-size:6.2px;color:#555">C</div><div class="t" style="left:638.3px;top:128.50px;font-size:7px;color:#454545;font-weight:bold;font-style:normal;-webkit-text-stroke:0;letter-spacing:-0.25px">store_location</div><div class="ab" style="left:709.96px;top:127.3px;width:9.5px;height:9.3px;background:#fff;border:1px solid #c6c6c6"></div><svg class="ab" style="left:709.96px;top:127.3px" width="9.5" height="9.3" viewBox="0 0 9.5 9.3"><path d="M2.9 3.7 H6.6 L4.75 5.7 Z" fill="#555"/></svg><div class="ab" style="left:628.20px;top:146.60px;width:4px;height:4px;border-radius:50%;background:#01b8aa"></div><div class="t" style="left:635.8px;top:145.10px;font-size:7px;color:#5a5a5a;font-weight:normal;font-style:normal;">Valid</div><div class="t" style="right:308.03999999999996px;top:145.10px;font-size:7px;color:#5a5a5a;font-weight:normal;font-style:normal;text-align:right;">100%</div><div class="ab" style="left:628.20px;top:156.40px;width:4px;height:4px;border-radius:50%;background:#e0504f"></div><div class="t" style="left:635.8px;top:154.90px;font-size:7px;color:#5a5a5a;font-weight:normal;font-style:normal;">Error</div><div class="t" style="right:308.03999999999996px;top:154.90px;font-size:7px;color:#5a5a5a;font-weight:normal;font-style:normal;text-align:right;">0%</div><div class="ab" style="left:628.20px;top:166.20px;width:4px;height:4px;border-radius:50%;background:#444"></div><div class="t" style="left:635.8px;top:164.70px;font-size:7px;color:#5a5a5a;font-weight:normal;font-style:normal;">Empty</div><div class="t" style="right:308.03999999999996px;top:164.70px;font-size:7px;color:#5a5a5a;font-weight:normal;font-style:normal;text-align:right;">0%</div><div class="ab" style="left:627.35px;top:176.25px;width:2.5px;height:36.05px;background:#01b8aa"></div><div class="ab" style="left:631.66px;top:176.25px;width:2.5px;height:36.05px;background:#01b8aa"></div><div class="ab" style="left:635.97px;top:177.00px;width:2.5px;height:35.30px;background:#01b8aa"></div><div class="t" style="left:627.1999999999999px;top:214.80px;font-size:7px;color:#555;font-weight:normal;font-style:normal;">3 distinct, 0 unique</div><div class="ab" style="left:820px;top:125px;width:1px;height:298px;background:#e3e3e3"></div><svg class="ab" style="left:723.66px;top:126.8px" width="10" height="10" viewBox="0 0 10 10"><path d="M0.5 4.5 L1.6 3.5 V8" fill="none" stroke="#555" stroke-width="0.9"/><path d="M2.4 1.3 Q2.7 0.5 3.6 0.5 Q4.7 0.5 4.7 1.5 Q4.7 2.3 2.4 4.5 H4.9" fill="none" stroke="#555" stroke-width="0.8"/><path d="M5.6 5.9 Q6.2 5.5 7.1 5.5 Q8.6 5.5 8.6 6.4 Q8.6 7.3 6.9 7.3 Q8.8 7.3 8.8 8.3 Q8.8 9.3 7.1 9.3 Q6.1 9.3 5.5 8.9" fill="none" stroke="#555" stroke-width="0.8"/></svg><div class="t" style="left:737.0600000000001px;top:128.50px;font-size:7px;color:#454545;font-weight:bold;font-style:normal;-webkit-text-stroke:0;letter-spacing:-0.25px">product_id</div><div class="ab" style="left:808.62px;top:127.3px;width:9.5px;height:9.3px;background:#fff;border:1px solid #c6c6c6"></div><svg class="ab" style="left:808.62px;top:127.3px" width="9.5" height="9.3" viewBox="0 0 9.5 9.3"><path d="M2.9 3.7 H6.6 L4.75 5.7 Z" fill="#555"/></svg><div class="ab" style="left:726.86px;top:146.60px;width:4px;height:4px;border-radius:50%;background:#01b8aa"></div><div class="t" style="left:734.46px;top:145.10px;font-size:7px;color:#5a5a5a;font-weight:normal;font-style:normal;">Valid</div><div class="t" style="right:209.38px;top:145.10px;font-size:7px;color:#5a5a5a;font-weight:normal;font-style:normal;text-align:right;">100%</div><div class="ab" style="left:726.86px;top:156.40px;width:4px;height:4px;border-radius:50%;background:#e0504f"></div><div class="t" style="left:734.46px;top:154.90px;font-size:7px;color:#5a5a5a;font-weight:normal;font-style:normal;">Error</div><div class="t" style="right:209.38px;top:154.90px;font-size:7px;color:#5a5a5a;font-weight:normal;font-style:normal;text-align:right;">0%</div><div class="ab" style="left:726.86px;top:166.20px;width:4px;height:4px;border-radius:50%;background:#444"></div><div class="t" style="left:734.46px;top:164.70px;font-size:7px;color:#5a5a5a;font-weight:normal;font-style:normal;">Empty</div><div class="t" style="right:209.38px;top:164.70px;font-size:7px;color:#5a5a5a;font-weight:normal;font-style:normal;text-align:right;">0%</div><div class="ab" style="left:726.01px;top:176.25px;width:2.5px;height:36.05px;background:#01b8aa"></div><div class="ab" style="left:730.32px;top:178.80px;width:2.5px;height:33.50px;background:#01b8aa"></div><div class="ab" style="left:734.63px;top:179.80px;width:2.5px;height:32.50px;background:#01b8aa"></div><div class="ab" style="left:738.94px;top:179.80px;width:2.5px;height:32.50px;background:#01b8aa"></div><div class="ab" style="left:743.25px;top:179.80px;width:2.5px;height:32.50px;background:#01b8aa"></div><div class="ab" style="left:747.56px;top:181.10px;width:2.5px;height:31.20px;background:#01b8aa"></div><div class="ab" style="left:751.87px;top:181.10px;width:2.5px;height:31.20px;background:#01b8aa"></div><div class="ab" style="left:756.18px;top:181.10px;width:2.5px;height:31.20px;background:#01b8aa"></div><div class="ab" style="left:760.49px;top:182.30px;width:2.5px;height:30.00px;background:#01b8aa"></div><div class="ab" style="left:764.80px;top:182.30px;width:2.5px;height:30.00px;background:#01b8aa"></div><div class="ab" style="left:769.11px;top:182.30px;width:2.5px;height:30.00px;background:#01b8aa"></div><div class="ab" style="left:773.42px;top:182.30px;width:2.5px;height:30.00px;background:#01b8aa"></div><div class="ab" style="left:777.73px;top:182.30px;width:2.5px;height:30.00px;background:#01b8aa"></div><div class="ab" style="left:782.04px;top:182.30px;width:2.5px;height:30.00px;background:#01b8aa"></div><div class="ab" style="left:786.35px;top:183.70px;width:2.5px;height:28.60px;background:#01b8aa"></div><div class="ab" style="left:790.66px;top:183.70px;width:2.5px;height:28.60px;background:#01b8aa"></div><div class="ab" style="left:794.97px;top:183.70px;width:2.5px;height:28.60px;background:#01b8aa"></div><div class="ab" style="left:799.28px;top:183.70px;width:2.5px;height:28.60px;background:#01b8aa"></div><div class="ab" style="left:803.59px;top:184.80px;width:2.5px;height:27.50px;background:#01b8aa"></div><div class="ab" style="left:807.90px;top:186.00px;width:2.5px;height:26.30px;background:#01b8aa"></div><div class="ab" style="left:812.21px;top:186.00px;width:2.5px;height:26.30px;background:#01b8aa"></div><div class="t" style="left:725.86px;top:214.80px;font-size:7px;color:#555;font-weight:normal;font-style:normal;">52 distinct, 0 unique</div><div class="ab" style="left:918px;top:125px;width:1px;height:298px;background:#e3e3e3"></div><div class="t" style="left:821.32px;top:129.2px;font-size:6.5px;color:#555">A</div><div class="t" style="left:825.52px;top:126.4px;font-size:6px;color:#555">B</div><div class="t" style="left:829.32px;top:131.6px;font-size:6.2px;color:#555">C</div><div class="t" style="left:835.62px;top:128.50px;font-size:7px;color:#454545;font-weight:bold;font-style:normal;-webkit-text-stroke:0;letter-spacing:-0.25px">product_category</div><div class="ab" style="left:907.28px;top:127.3px;width:9.5px;height:9.3px;background:#fff;border:1px solid #c6c6c6"></div><svg class="ab" style="left:907.28px;top:127.3px" width="9.5" height="9.3" viewBox="0 0 9.5 9.3"><path d="M2.9 3.7 H6.6 L4.75 5.7 Z" fill="#555"/></svg><div class="ab" style="left:825.52px;top:146.60px;width:4px;height:4px;border-radius:50%;background:#01b8aa"></div><div class="t" style="left:833.12px;top:145.10px;font-size:7px;color:#5a5a5a;font-weight:normal;font-style:normal;">Valid</div><div class="t" style="right:110.72000000000003px;top:145.10px;font-size:7px;color:#5a5a5a;font-weight:normal;font-style:normal;text-align:right;">100%</div><div class="ab" style="left:825.52px;top:156.40px;width:4px;height:4px;border-radius:50%;background:#e0504f"></div><div class="t" style="left:833.12px;top:154.90px;font-size:7px;color:#5a5a5a;font-weight:normal;font-style:normal;">Error</div><div class="t" style="right:110.72000000000003px;top:154.90px;font-size:7px;color:#5a5a5a;font-weight:normal;font-style:normal;text-align:right;">0%</div><div class="ab" style="left:825.52px;top:166.20px;width:4px;height:4px;border-radius:50%;background:#444"></div><div class="t" style="left:833.12px;top:164.70px;font-size:7px;color:#5a5a5a;font-weight:normal;font-style:normal;">Empty</div><div class="t" style="right:110.72000000000003px;top:164.70px;font-size:7px;color:#5a5a5a;font-weight:normal;font-style:normal;text-align:right;">0%</div><div class="ab" style="left:824.67px;top:176.25px;width:2.5px;height:36.05px;background:#01b8aa"></div><div class="ab" style="left:828.98px;top:183.75px;width:2.5px;height:28.55px;background:#01b8aa"></div><div class="ab" style="left:833.29px;top:200.90px;width:2.5px;height:11.40px;background:#01b8aa"></div><div class="ab" style="left:837.60px;top:205.20px;width:2.5px;height:7.10px;background:#01b8aa"></div><div class="t" style="left:824.52px;top:214.80px;font-size:7px;color:#555;font-weight:normal;font-style:normal;">4 distinct, 0 unique</div><div class="t" style="left:919.98px;top:129.2px;font-size:6.5px;color:#555">A</div><div class="t" style="left:924.18px;top:126.4px;font-size:6px;color:#555">B</div><div class="t" style="left:927.98px;top:131.6px;font-size:6.2px;color:#555">C</div><div class="t" style="left:934.28px;top:128.50px;font-size:7px;color:#454545;font-weight:bold;font-style:normal;-webkit-text-stroke:0;letter-spacing:-0.25px">product_type</div><div class="ab" style="left:1006.40px;top:127.3px;width:9.5px;height:9.3px;background:#fff;border:1px solid #c6c6c6"></div><svg class="ab" style="left:1006.40px;top:127.3px" width="9.5" height="9.3" viewBox="0 0 9.5 9.3"><path d="M2.9 3.7 H6.6 L4.75 5.7 Z" fill="#555"/></svg><div class="ab" style="left:924.18px;top:146.60px;width:4px;height:4px;border-radius:50%;background:#01b8aa"></div><div class="t" style="left:931.78px;top:145.10px;font-size:7px;color:#5a5a5a;font-weight:normal;font-style:normal;">Valid</div><div class="t" style="right:11.600000000000023px;top:145.10px;font-size:7px;color:#5a5a5a;font-weight:normal;font-style:normal;text-align:right;">100%</div><div class="ab" style="left:924.18px;top:156.40px;width:4px;height:4px;border-radius:50%;background:#e0504f"></div><div class="t" style="left:931.78px;top:154.90px;font-size:7px;color:#5a5a5a;font-weight:normal;font-style:normal;">Error</div><div class="t" style="right:11.600000000000023px;top:154.90px;font-size:7px;color:#5a5a5a;font-weight:normal;font-style:normal;text-align:right;">0%</div><div class="ab" style="left:924.18px;top:166.20px;width:4px;height:4px;border-radius:50%;background:#444"></div><div class="t" style="left:931.78px;top:164.70px;font-size:7px;color:#5a5a5a;font-weight:normal;font-style:normal;">Empty</div><div class="t" style="right:11.600000000000023px;top:164.70px;font-size:7px;color:#5a5a5a;font-weight:normal;font-style:normal;text-align:right;">0%</div><div class="ab" style="left:923.33px;top:176.25px;width:2.5px;height:36.05px;background:#01b8aa"></div><div class="ab" style="left:927.64px;top:179.80px;width:2.5px;height:32.50px;background:#01b8aa"></div><div class="ab" style="left:931.95px;top:180.30px;width:2.5px;height:32.00px;background:#01b8aa"></div><div class="ab" style="left:936.26px;top:188.40px;width:2.5px;height:23.90px;background:#01b8aa"></div><div class="ab" style="left:940.57px;top:189.70px;width:2.5px;height:22.60px;background:#01b8aa"></div><div class="ab" style="left:944.88px;top:190.30px;width:2.5px;height:22.00px;background:#01b8aa"></div><div class="ab" style="left:949.19px;top:190.90px;width:2.5px;height:21.40px;background:#01b8aa"></div><div class="ab" style="left:953.50px;top:191.70px;width:2.5px;height:20.60px;background:#01b8aa"></div><div class="ab" style="left:957.81px;top:194.50px;width:2.5px;height:17.80px;background:#01b8aa"></div><div class="ab" style="left:962.12px;top:194.70px;width:2.5px;height:17.60px;background:#01b8aa"></div><div class="ab" style="left:966.43px;top:198.90px;width:2.5px;height:13.40px;background:#01b8aa"></div><div class="ab" style="left:970.74px;top:201.25px;width:2.5px;height:11.05px;background:#01b8aa"></div><div class="ab" style="left:975.05px;top:203.10px;width:2.5px;height:9.20px;background:#01b8aa"></div><div class="t" style="left:923.18px;top:214.80px;font-size:7px;color:#555;font-weight:normal;font-style:normal;">13 distinct, 0 unique</div><div class="ab" style="left:112px;top:222px;width:893px;height:1px;background:#e3e3e3"></div><div class="ab" style="left:112px;top:235px;width:893px;height:1px;background:#e4e4e4"></div><div class="t" style="left:21px;width:200px;top:225.80px;font-size:8px;color:#555;font-weight:normal;font-style:normal;text-align:center;">1</div><div class="t" style="right:798.04px;top:225.90px;font-size:7px;color:#505050;font-weight:normal;font-style:italic;text-align:right;-webkit-text-stroke:0.08px #505050;">1</div><div class="t" style="right:699.38px;top:225.90px;font-size:7px;color:#505050;font-weight:normal;font-style:italic;text-align:right;-webkit-text-stroke:0.08px #505050;">1/1/2023</div><div class="t" style="right:600.72px;top:225.90px;font-size:7px;color:#505050;font-weight:normal;font-style:italic;text-align:right;-webkit-text-stroke:0.08px #505050;">12/31/1899 7:06:11 AM</div><div class="t" style="right:502.06000000000006px;top:225.90px;font-size:7px;color:#505050;font-weight:normal;font-style:italic;text-align:right;-webkit-text-stroke:0.08px #505050;">10</div><div class="t" style="right:403.4000000000001px;top:225.90px;font-size:7px;color:#505050;font-weight:normal;font-style:italic;text-align:right;-webkit-text-stroke:0.08px #505050;">5</div><div class="t" style="left:625.3px;top:225.90px;font-size:7px;color:#505050;font-weight:normal;font-style:normal;-webkit-text-stroke:0.08px #505050;">Lower Moonhotton</div><div class="t" style="right:206.08000000000004px;top:225.90px;font-size:7px;color:#505050;font-weight:normal;font-style:italic;text-align:right;-webkit-text-stroke:0.08px #505050;">32</div><div class="t" style="left:822.62px;top:225.90px;font-size:7px;color:#505050;font-weight:normal;font-style:normal;-webkit-text-stroke:0.08px #505050;">Coffee</div><div class="t" style="left:921.28px;top:225.90px;font-size:7px;color:#505050;font-weight:normal;font-style:normal;-webkit-text-stroke:0.08px #505050;">Gourmet brewed coffee</div><div class="ab" style="left:112px;top:248px;width:893px;height:1px;background:#e4e4e4"></div><div class="t" style="left:21px;width:200px;top:238.80px;font-size:8px;color:#555;font-weight:normal;font-style:normal;text-align:center;">2</div><div class="t" style="right:798.04px;top:238.90px;font-size:7px;color:#505050;font-weight:normal;font-style:italic;text-align:right;-webkit-text-stroke:0.08px #505050;">2</div><div class="t" style="right:699.38px;top:238.90px;font-size:7px;color:#505050;font-weight:normal;font-style:italic;text-align:right;-webkit-text-stroke:0.08px #505050;">1/1/2023</div><div class="t" style="right:600.72px;top:238.90px;font-size:7px;color:#505050;font-weight:normal;font-style:italic;text-align:right;-webkit-text-stroke:0.08px #505050;">12/31/1899 7:08:56 AM</div><div class="t" style="right:502.06000000000006px;top:238.90px;font-size:7px;color:#505050;font-weight:normal;font-style:italic;text-align:right;-webkit-text-stroke:0.08px #505050;">20</div><div class="t" style="right:403.4000000000001px;top:238.90px;font-size:7px;color:#505050;font-weight:normal;font-style:italic;text-align:right;-webkit-text-stroke:0.08px #505050;">5</div><div class="t" style="left:625.3px;top:238.90px;font-size:7px;color:#505050;font-weight:normal;font-style:normal;-webkit-text-stroke:0.08px #505050;">Lower Moonhotton</div><div class="t" style="right:206.08000000000004px;top:238.90px;font-size:7px;color:#505050;font-weight:normal;font-style:italic;text-align:right;-webkit-text-stroke:0.08px #505050;">57</div><div class="t" style="left:822.62px;top:238.90px;font-size:7px;color:#505050;font-weight:normal;font-style:normal;-webkit-text-stroke:0.08px #505050;">Tea</div><div class="t" style="left:921.28px;top:238.90px;font-size:7px;color:#505050;font-weight:normal;font-style:normal;-webkit-text-stroke:0.08px #505050;">Brewed Chai tea</div><div class="ab" style="left:112px;top:261px;width:893px;height:1px;background:#e4e4e4"></div><div class="t" style="left:21px;width:200px;top:251.80px;font-size:8px;color:#555;font-weight:normal;font-style:normal;text-align:center;">3</div><div class="t" style="right:798.04px;top:251.90px;font-size:7px;color:#505050;font-weight:normal;font-style:italic;text-align:right;-webkit-text-stroke:0.08px #505050;">3</div><div class="t" style="right:699.38px;top:251.90px;font-size:7px;color:#505050;font-weight:normal;font-style:italic;text-align:right;-webkit-text-stroke:0.08px #505050;">1/1/2023</div><div class="t" style="right:600.72px;top:251.90px;font-size:7px;color:#505050;font-weight:normal;font-style:italic;text-align:right;-webkit-text-stroke:0.08px #505050;">12/31/1899 7:14:04 AM</div><div class="t" style="right:502.06000000000006px;top:251.90px;font-size:7px;color:#505050;font-weight:normal;font-style:italic;text-align:right;-webkit-text-stroke:0.08px #505050;">20</div><div class="t" style="right:403.4000000000001px;top:251.90px;font-size:7px;color:#505050;font-weight:normal;font-style:italic;text-align:right;-webkit-text-stroke:0.08px #505050;">5</div><div class="t" style="left:625.3px;top:251.90px;font-size:7px;color:#505050;font-weight:normal;font-style:normal;-webkit-text-stroke:0.08px #505050;">Lower Moonhotton</div><div class="t" style="right:206.08000000000004px;top:251.90px;font-size:7px;color:#505050;font-weight:normal;font-style:italic;text-align:right;-webkit-text-stroke:0.08px #505050;">59</div><div class="t" style="left:822.62px;top:251.90px;font-size:7px;color:#505050;font-weight:normal;font-style:normal;-webkit-text-stroke:0.08px #505050;">Drinking Chocolate</div><div class="t" style="left:921.28px;top:251.90px;font-size:7px;color:#505050;font-weight:normal;font-style:normal;-webkit-text-stroke:0.08px #505050;">Hot chocolate</div><div class="ab" style="left:112px;top:274px;width:893px;height:1px;background:#e4e4e4"></div><div class="t" style="left:21px;width:200px;top:264.80px;font-size:8px;color:#555;font-weight:normal;font-style:normal;text-align:center;">4</div><div class="t" style="right:798.04px;top:264.90px;font-size:7px;color:#505050;font-weight:normal;font-style:italic;text-align:right;-webkit-text-stroke:0.08px #505050;">4</div><div class="t" style="right:699.38px;top:264.90px;font-size:7px;color:#505050;font-weight:normal;font-style:italic;text-align:right;-webkit-text-stroke:0.08px #505050;">1/1/2023</div><div class="t" style="right:600.72px;top:264.90px;font-size:7px;color:#505050;font-weight:normal;font-style:italic;text-align:right;-webkit-text-stroke:0.08px #505050;">12/31/1899 7:20:24 AM</div><div class="t" style="right:502.06000000000006px;top:264.90px;font-size:7px;color:#505050;font-weight:normal;font-style:italic;text-align:right;-webkit-text-stroke:0.08px #505050;">10</div><div class="t" style="right:403.4000000000001px;top:264.90px;font-size:7px;color:#505050;font-weight:normal;font-style:italic;text-align:right;-webkit-text-stroke:0.08px #505050;">5</div><div class="t" style="left:625.3px;top:264.90px;font-size:7px;color:#505050;font-weight:normal;font-style:normal;-webkit-text-stroke:0.08px #505050;">Lower Moonhotton</div><div class="t" style="right:206.08000000000004px;top:264.90px;font-size:7px;color:#505050;font-weight:normal;font-style:italic;text-align:right;-webkit-text-stroke:0.08px #505050;">22</div><div class="t" style="left:822.62px;top:264.90px;font-size:7px;color:#505050;font-weight:normal;font-style:normal;-webkit-text-stroke:0.08px #505050;">Coffee</div><div class="t" style="left:921.28px;top:264.90px;font-size:7px;color:#505050;font-weight:normal;font-style:normal;-webkit-text-stroke:0.08px #505050;">Drip coffee</div><div class="ab" style="left:112px;top:287px;width:893px;height:1px;background:#e4e4e4"></div><div class="t" style="left:21px;width:200px;top:277.80px;font-size:8px;color:#555;font-weight:normal;font-style:normal;text-align:center;">5</div><div class="t" style="right:798.04px;top:277.90px;font-size:7px;color:#505050;font-weight:normal;font-style:italic;text-align:right;-webkit-text-stroke:0.08px #505050;">5</div><div class="t" style="right:699.38px;top:277.90px;font-size:7px;color:#505050;font-weight:normal;font-style:italic;text-align:right;-webkit-text-stroke:0.08px #505050;">1/1/2023</div><div class="t" style="right:600.72px;top:277.90px;font-size:7px;color:#505050;font-weight:normal;font-style:italic;text-align:right;-webkit-text-stroke:0.08px #505050;">12/31/1899 7:22:41 AM</div><div class="t" style="right:502.06000000000006px;top:277.90px;font-size:7px;color:#505050;font-weight:normal;font-style:italic;text-align:right;-webkit-text-stroke:0.08px #505050;">20</div><div class="t" style="right:403.4000000000001px;top:277.90px;font-size:7px;color:#505050;font-weight:normal;font-style:italic;text-align:right;-webkit-text-stroke:0.08px #505050;">5</div><div class="t" style="left:625.3px;top:277.90px;font-size:7px;color:#505050;font-weight:normal;font-style:normal;-webkit-text-stroke:0.08px #505050;">Lower Moonhotton</div><div class="t" style="right:206.08000000000004px;top:277.90px;font-size:7px;color:#505050;font-weight:normal;font-style:italic;text-align:right;-webkit-text-stroke:0.08px #505050;">57</div><div class="t" style="left:822.62px;top:277.90px;font-size:7px;color:#505050;font-weight:normal;font-style:normal;-webkit-text-stroke:0.08px #505050;">Tea</div><div class="t" style="left:921.28px;top:277.90px;font-size:7px;color:#505050;font-weight:normal;font-style:normal;-webkit-text-stroke:0.08px #505050;">Brewed Chai tea</div><div class="ab" style="left:112px;top:300px;width:893px;height:1px;background:#e4e4e4"></div><div class="t" style="left:21px;width:200px;top:290.80px;font-size:8px;color:#555;font-weight:normal;font-style:normal;text-align:center;">6</div><div class="t" style="right:798.04px;top:290.90px;font-size:7px;color:#505050;font-weight:normal;font-style:italic;text-align:right;-webkit-text-stroke:0.08px #505050;">6</div><div class="t" style="right:699.38px;top:290.90px;font-size:7px;color:#505050;font-weight:normal;font-style:italic;text-align:right;-webkit-text-stroke:0.08px #505050;">1/1/2023</div><div class="t" style="right:600.72px;top:290.90px;font-size:7px;color:#505050;font-weight:normal;font-style:italic;text-align:right;-webkit-text-stroke:0.08px #505050;">12/31/1899 7:22:41 AM</div><div class="t" style="right:502.06000000000006px;top:290.90px;font-size:7px;color:#505050;font-weight:normal;font-style:italic;text-align:right;-webkit-text-stroke:0.08px #505050;">10</div><div class="t" style="right:403.4000000000001px;top:290.90px;font-size:7px;color:#505050;font-weight:normal;font-style:italic;text-align:right;-webkit-text-stroke:0.08px #505050;">5</div><div class="t" style="left:625.3px;top:290.90px;font-size:7px;color:#505050;font-weight:normal;font-style:normal;-webkit-text-stroke:0.08px #505050;">Lower Moonhotton</div><div class="t" style="right:206.08000000000004px;top:290.90px;font-size:7px;color:#505050;font-weight:normal;font-style:italic;text-align:right;-webkit-text-stroke:0.08px #505050;">77</div><div class="t" style="left:822.62px;top:290.90px;font-size:7px;color:#505050;font-weight:normal;font-style:normal;-webkit-text-stroke:0.08px #505050;">Bakery</div><div class="t" style="left:921.28px;top:290.90px;font-size:7px;color:#505050;font-weight:normal;font-style:normal;-webkit-text-stroke:0.08px #505050;">Scone</div><div class="ab" style="left:112px;top:313px;width:893px;height:1px;background:#e4e4e4"></div><div class="t" style="left:21px;width:200px;top:303.80px;font-size:8px;color:#555;font-weight:normal;font-style:normal;text-align:center;">7</div><div class="t" style="right:798.04px;top:303.90px;font-size:7px;color:#505050;font-weight:normal;font-style:italic;text-align:right;-webkit-text-stroke:0.08px #505050;">7</div><div class="t" style="right:699.38px;top:303.90px;font-size:7px;color:#505050;font-weight:normal;font-style:italic;text-align:right;-webkit-text-stroke:0.08px #505050;">1/1/2023</div><div class="t" style="right:600.72px;top:303.90px;font-size:7px;color:#505050;font-weight:normal;font-style:italic;text-align:right;-webkit-text-stroke:0.08px #505050;">12/31/1899 7:25:49 AM</div><div class="t" style="right:502.06000000000006px;top:303.90px;font-size:7px;color:#505050;font-weight:normal;font-style:italic;text-align:right;-webkit-text-stroke:0.08px #505050;">10</div><div class="t" style="right:403.4000000000001px;top:303.90px;font-size:7px;color:#505050;font-weight:normal;font-style:italic;text-align:right;-webkit-text-stroke:0.08px #505050;">5</div><div class="t" style="left:625.3px;top:303.90px;font-size:7px;color:#505050;font-weight:normal;font-style:normal;-webkit-text-stroke:0.08px #505050;">Lower Moonhotton</div><div class="t" style="right:206.08000000000004px;top:303.90px;font-size:7px;color:#505050;font-weight:normal;font-style:italic;text-align:right;-webkit-text-stroke:0.08px #505050;">22</div><div class="t" style="left:822.62px;top:303.90px;font-size:7px;color:#505050;font-weight:normal;font-style:normal;-webkit-text-stroke:0.08px #505050;">Coffee</div><div class="t" style="left:921.28px;top:303.90px;font-size:7px;color:#505050;font-weight:normal;font-style:normal;-webkit-text-stroke:0.08px #505050;">Drip coffee</div><div class="ab" style="left:112px;top:326px;width:893px;height:1px;background:#e4e4e4"></div><div class="t" style="left:21px;width:200px;top:316.80px;font-size:8px;color:#555;font-weight:normal;font-style:normal;text-align:center;">8</div><div class="t" style="right:798.04px;top:316.90px;font-size:7px;color:#505050;font-weight:normal;font-style:italic;text-align:right;-webkit-text-stroke:0.08px #505050;">8</div><div class="t" style="right:699.38px;top:316.90px;font-size:7px;color:#505050;font-weight:normal;font-style:italic;text-align:right;-webkit-text-stroke:0.08px #505050;">1/1/2023</div><div class="t" style="right:600.72px;top:316.90px;font-size:7px;color:#505050;font-weight:normal;font-style:italic;text-align:right;-webkit-text-stroke:0.08px #505050;">12/31/1899 7:33:34 AM</div><div class="t" style="right:502.06000000000006px;top:316.90px;font-size:7px;color:#505050;font-weight:normal;font-style:italic;text-align:right;-webkit-text-stroke:0.08px #505050;">20</div><div class="t" style="right:403.4000000000001px;top:316.90px;font-size:7px;color:#505050;font-weight:normal;font-style:italic;text-align:right;-webkit-text-stroke:0.08px #505050;">5</div><div class="t" style="left:625.3px;top:316.90px;font-size:7px;color:#505050;font-weight:normal;font-style:normal;-webkit-text-stroke:0.08px #505050;">Lower Moonhotton</div><div class="t" style="right:206.08000000000004px;top:316.90px;font-size:7px;color:#505050;font-weight:normal;font-style:italic;text-align:right;-webkit-text-stroke:0.08px #505050;">28</div><div class="t" style="left:822.62px;top:316.90px;font-size:7px;color:#505050;font-weight:normal;font-style:normal;-webkit-text-stroke:0.08px #505050;">Coffee</div><div class="t" style="left:921.28px;top:316.90px;font-size:7px;color:#505050;font-weight:normal;font-style:normal;-webkit-text-stroke:0.08px #505050;">Gourmet brewed coffee</div><div class="ab" style="left:112px;top:339px;width:893px;height:1px;background:#e4e4e4"></div><div class="t" style="left:21px;width:200px;top:329.80px;font-size:8px;color:#555;font-weight:normal;font-style:normal;text-align:center;">9</div><div class="t" style="right:798.04px;top:329.90px;font-size:7px;color:#505050;font-weight:normal;font-style:italic;text-align:right;-webkit-text-stroke:0.08px #505050;">9</div><div class="t" style="right:699.38px;top:329.90px;font-size:7px;color:#505050;font-weight:normal;font-style:italic;text-align:right;-webkit-text-stroke:0.08px #505050;">1/1/2023</div><div class="t" style="right:600.72px;top:329.90px;font-size:7px;color:#505050;font-weight:normal;font-style:italic;text-align:right;-webkit-text-stroke:0.08px #505050;">12/31/1899 7:39:13 AM</div><div class="t" style="right:502.06000000000006px;top:329.90px;font-size:7px;color:#505050;font-weight:normal;font-style:italic;text-align:right;-webkit-text-stroke:0.08px #505050;">10</div><div class="t" style="right:403.4000000000001px;top:329.90px;font-size:7px;color:#505050;font-weight:normal;font-style:italic;text-align:right;-webkit-text-stroke:0.08px #505050;">5</div><div class="t" style="left:625.3px;top:329.90px;font-size:7px;color:#505050;font-weight:normal;font-style:normal;-webkit-text-stroke:0.08px #505050;">Lower Moonhotton</div><div class="t" style="right:206.08000000000004px;top:329.90px;font-size:7px;color:#505050;font-weight:normal;font-style:italic;text-align:right;-webkit-text-stroke:0.08px #505050;">39</div><div class="t" style="left:822.62px;top:329.90px;font-size:7px;color:#505050;font-weight:normal;font-style:normal;-webkit-text-stroke:0.08px #505050;">Coffee</div><div class="t" style="left:921.28px;top:329.90px;font-size:7px;color:#505050;font-weight:normal;font-style:normal;-webkit-text-stroke:0.08px #505050;">Barista Espresso</div><div class="ab" style="left:112px;top:352px;width:893px;height:1px;background:#e4e4e4"></div><div class="t" style="left:21px;width:200px;top:342.80px;font-size:8px;color:#555;font-weight:normal;font-style:normal;text-align:center;">10</div><div class="t" style="right:798.04px;top:342.90px;font-size:7px;color:#505050;font-weight:normal;font-style:italic;text-align:right;-webkit-text-stroke:0.08px #505050;">10</div><div class="t" style="right:699.38px;top:342.90px;font-size:7px;color:#505050;font-weight:normal;font-style:italic;text-align:right;-webkit-text-stroke:0.08px #505050;">1/1/2023</div><div class="t" style="right:600.72px;top:342.90px;font-size:7px;color:#505050;font-weight:normal;font-style:italic;text-align:right;-webkit-text-stroke:0.08px #505050;">12/31/1899 7:39:34 AM</div><div class="t" style="right:502.06000000000006px;top:342.90px;font-size:7px;color:#505050;font-weight:normal;font-style:italic;text-align:right;-webkit-text-stroke:0.08px #505050;">20</div><div class="t" style="right:403.4000000000001px;top:342.90px;font-size:7px;color:#505050;font-weight:normal;font-style:italic;text-align:right;-webkit-text-stroke:0.08px #505050;">5</div><div class="t" style="left:625.3px;top:342.90px;font-size:7px;color:#505050;font-weight:normal;font-style:normal;-webkit-text-stroke:0.08px #505050;">Lower Moonhotton</div><div class="t" style="right:206.08000000000004px;top:342.90px;font-size:7px;color:#505050;font-weight:normal;font-style:italic;text-align:right;-webkit-text-stroke:0.08px #505050;">58</div><div class="t" style="left:822.62px;top:342.90px;font-size:7px;color:#505050;font-weight:normal;font-style:normal;-webkit-text-stroke:0.08px #505050;">Drinking Chocolate</div><div class="t" style="left:921.28px;top:342.90px;font-size:7px;color:#505050;font-weight:normal;font-style:normal;-webkit-text-stroke:0.08px #505050;">Hot chocolate</div><div class="ab" style="left:112px;top:365px;width:893px;height:1px;background:#e4e4e4"></div><div class="t" style="left:21px;width:200px;top:355.80px;font-size:8px;color:#555;font-weight:normal;font-style:normal;text-align:center;">11</div><div class="t" style="right:798.04px;top:355.90px;font-size:7px;color:#505050;font-weight:normal;font-style:italic;text-align:right;-webkit-text-stroke:0.08px #505050;">11</div><div class="t" style="right:699.38px;top:355.90px;font-size:7px;color:#505050;font-weight:normal;font-style:italic;text-align:right;-webkit-text-stroke:0.08px #505050;">1/1/2023</div><div class="t" style="right:600.72px;top:355.90px;font-size:7px;color:#505050;font-weight:normal;font-style:italic;text-align:right;-webkit-text-stroke:0.08px #505050;">12/31/1899 7:43:05 AM</div><div class="t" style="right:502.06000000000006px;top:355.90px;font-size:7px;color:#505050;font-weight:normal;font-style:italic;text-align:right;-webkit-text-stroke:0.08px #505050;">10</div><div class="t" style="right:403.4000000000001px;top:355.90px;font-size:7px;color:#505050;font-weight:normal;font-style:italic;text-align:right;-webkit-text-stroke:0.08px #505050;">5</div><div class="t" style="left:625.3px;top:355.90px;font-size:7px;color:#505050;font-weight:normal;font-style:normal;-webkit-text-stroke:0.08px #505050;">Lower Moonhotton</div><div class="t" style="right:206.08000000000004px;top:355.90px;font-size:7px;color:#505050;font-weight:normal;font-style:italic;text-align:right;-webkit-text-stroke:0.08px #505050;">56</div><div class="t" style="left:822.62px;top:355.90px;font-size:7px;color:#505050;font-weight:normal;font-style:normal;-webkit-text-stroke:0.08px #505050;">Tea</div><div class="t" style="left:921.28px;top:355.90px;font-size:7px;color:#505050;font-weight:normal;font-style:normal;-webkit-text-stroke:0.08px #505050;">Brewed Chai tea</div><div class="ab" style="left:112px;top:378px;width:893px;height:1px;background:#e4e4e4"></div><div class="t" style="left:21px;width:200px;top:368.80px;font-size:8px;color:#555;font-weight:normal;font-style:normal;text-align:center;">12</div><div class="t" style="right:798.04px;top:368.90px;font-size:7px;color:#505050;font-weight:normal;font-style:italic;text-align:right;-webkit-text-stroke:0.08px #505050;">12</div><div class="t" style="right:699.38px;top:368.90px;font-size:7px;color:#505050;font-weight:normal;font-style:italic;text-align:right;-webkit-text-stroke:0.08px #505050;">1/1/2023</div><div class="t" style="right:600.72px;top:368.90px;font-size:7px;color:#505050;font-weight:normal;font-style:italic;text-align:right;-webkit-text-stroke:0.08px #505050;">12/31/1899 7:44:35 AM</div><div class="t" style="right:502.06000000000006px;top:368.90px;font-size:7px;color:#505050;font-weight:normal;font-style:italic;text-align:right;-webkit-text-stroke:0.08px #505050;">20</div><div class="t" style="right:403.4000000000001px;top:368.90px;font-size:7px;color:#505050;font-weight:normal;font-style:italic;text-align:right;-webkit-text-stroke:0.08px #505050;">5</div><div class="t" style="left:625.3px;top:368.90px;font-size:7px;color:#505050;font-weight:normal;font-style:normal;-webkit-text-stroke:0.08px #505050;">Lower Moonhotton</div><div class="t" style="right:206.08000000000004px;top:368.90px;font-size:7px;color:#505050;font-weight:normal;font-style:italic;text-align:right;-webkit-text-stroke:0.08px #505050;">33</div><div class="t" style="left:822.62px;top:368.90px;font-size:7px;color:#505050;font-weight:normal;font-style:normal;-webkit-text-stroke:0.08px #505050;">Coffee</div><div class="t" style="left:921.28px;top:368.90px;font-size:7px;color:#505050;font-weight:normal;font-style:normal;-webkit-text-stroke:0.08px #505050;">Gourmet brewed coffee</div><div class="ab" style="left:112px;top:391px;width:893px;height:1px;background:#e4e4e4"></div><div class="t" style="left:21px;width:200px;top:381.80px;font-size:8px;color:#555;font-weight:normal;font-style:normal;text-align:center;">13</div><div class="t" style="right:798.04px;top:381.90px;font-size:7px;color:#505050;font-weight:normal;font-style:italic;text-align:right;-webkit-text-stroke:0.08px #505050;">13</div><div class="t" style="right:699.38px;top:381.90px;font-size:7px;color:#505050;font-weight:normal;font-style:italic;text-align:right;-webkit-text-stroke:0.08px #505050;">1/1/2023</div><div class="t" style="right:600.72px;top:381.90px;font-size:7px;color:#505050;font-weight:normal;font-style:italic;text-align:right;-webkit-text-stroke:0.08px #505050;">12/31/1899 7:45:51 AM</div><div class="t" style="right:502.06000000000006px;top:381.90px;font-size:7px;color:#505050;font-weight:normal;font-style:italic;text-align:right;-webkit-text-stroke:0.08px #505050;">10</div><div class="t" style="right:403.4000000000001px;top:381.90px;font-size:7px;color:#505050;font-weight:normal;font-style:italic;text-align:right;-webkit-text-stroke:0.08px #505050;">5</div><div class="t" style="left:625.3px;top:381.90px;font-size:7px;color:#505050;font-weight:normal;font-style:normal;-webkit-text-stroke:0.08px #505050;">Lower Moonhotton</div><div class="t" style="right:206.08000000000004px;top:381.90px;font-size:7px;color:#505050;font-weight:normal;font-style:italic;text-align:right;-webkit-text-stroke:0.08px #505050;">51</div><div class="t" style="left:822.62px;top:381.90px;font-size:7px;color:#505050;font-weight:normal;font-style:normal;-webkit-text-stroke:0.08px #505050;">Tea</div><div class="t" style="left:921.28px;top:381.90px;font-size:7px;color:#505050;font-weight:normal;font-style:normal;-webkit-text-stroke:0.08px #505050;">Brewed Black tea</div><div class="ab" style="left:112px;top:404px;width:893px;height:1px;background:#e4e4e4"></div><div class="t" style="left:21px;width:200px;top:394.80px;font-size:8px;color:#555;font-weight:normal;font-style:normal;text-align:center;">14</div><div class="t" style="right:798.04px;top:394.90px;font-size:7px;color:#505050;font-weight:normal;font-style:italic;text-align:right;-webkit-text-stroke:0.08px #505050;">14</div><div class="t" style="right:699.38px;top:394.90px;font-size:7px;color:#505050;font-weight:normal;font-style:italic;text-align:right;-webkit-text-stroke:0.08px #505050;">1/1/2023</div><div class="t" style="right:600.72px;top:394.90px;font-size:7px;color:#505050;font-weight:normal;font-style:italic;text-align:right;-webkit-text-stroke:0.08px #505050;">12/31/1899 7:48:19 AM</div><div class="t" style="right:502.06000000000006px;top:394.90px;font-size:7px;color:#505050;font-weight:normal;font-style:italic;text-align:right;-webkit-text-stroke:0.08px #505050;">10</div><div class="t" style="right:403.4000000000001px;top:394.90px;font-size:7px;color:#505050;font-weight:normal;font-style:italic;text-align:right;-webkit-text-stroke:0.08px #505050;">5</div><div class="t" style="left:625.3px;top:394.90px;font-size:7px;color:#505050;font-weight:normal;font-style:normal;-webkit-text-stroke:0.08px #505050;">Lower Moonhotton</div><div class="t" style="right:206.08000000000004px;top:394.90px;font-size:7px;color:#505050;font-weight:normal;font-style:italic;text-align:right;-webkit-text-stroke:0.08px #505050;">57</div><div class="t" style="left:822.62px;top:394.90px;font-size:7px;color:#505050;font-weight:normal;font-style:normal;-webkit-text-stroke:0.08px #505050;">Tea</div><div class="t" style="left:921.28px;top:394.90px;font-size:7px;color:#505050;font-weight:normal;font-style:normal;-webkit-text-stroke:0.08px #505050;">Brewed Chai tea</div><div class="ab" style="left:112px;top:417px;width:893px;height:1px;background:#e4e4e4"></div><div class="t" style="left:21px;width:200px;top:407.80px;font-size:8px;color:#555;font-weight:normal;font-style:normal;text-align:center;">15</div><div class="t" style="right:798.04px;top:407.90px;font-size:7px;color:#505050;font-weight:normal;font-style:italic;text-align:right;-webkit-text-stroke:0.08px #505050;">15</div><div class="t" style="right:699.38px;top:407.90px;font-size:7px;color:#505050;font-weight:normal;font-style:italic;text-align:right;-webkit-text-stroke:0.08px #505050;">1/1/2023</div><div class="t" style="right:600.72px;top:407.90px;font-size:7px;color:#505050;font-weight:normal;font-style:italic;text-align:right;-webkit-text-stroke:0.08px #505050;">12/31/1899 7:52:36 AM</div><div class="t" style="right:502.06000000000006px;top:407.90px;font-size:7px;color:#505050;font-weight:normal;font-style:italic;text-align:right;-webkit-text-stroke:0.08px #505050;">20</div><div class="t" style="right:403.4000000000001px;top:407.90px;font-size:7px;color:#505050;font-weight:normal;font-style:italic;text-align:right;-webkit-text-stroke:0.08px #505050;">5</div><div class="t" style="left:625.3px;top:407.90px;font-size:7px;color:#505050;font-weight:normal;font-style:normal;-webkit-text-stroke:0.08px #505050;">Lower Moonhotton</div><div class="t" style="right:206.08000000000004px;top:407.90px;font-size:7px;color:#505050;font-weight:normal;font-style:italic;text-align:right;-webkit-text-stroke:0.08px #505050;">87</div><div class="t" style="left:822.62px;top:407.90px;font-size:7px;color:#505050;font-weight:normal;font-style:normal;-webkit-text-stroke:0.08px #505050;">Coffee</div><div class="t" style="left:921.28px;top:407.90px;font-size:7px;color:#505050;font-weight:normal;font-style:normal;-webkit-text-stroke:0.08px #505050;">Barista Espresso</div><div class="ab" style="left:112px;top:430px;width:893px;height:1px;background:#e4e4e4"></div><div class="t" style="left:21px;width:200px;top:420.80px;font-size:8px;color:#555;font-weight:normal;font-style:normal;text-align:center;">16</div><div class="t" style="right:798.04px;top:420.90px;font-size:7px;color:#505050;font-weight:normal;font-style:italic;text-align:right;-webkit-text-stroke:0.08px #505050;">16</div><div class="t" style="right:699.38px;top:420.90px;font-size:7px;color:#505050;font-weight:normal;font-style:italic;text-align:right;-webkit-text-stroke:0.08px #505050;">1/1/2023</div><div class="t" style="right:600.72px;top:420.90px;font-size:7px;color:#505050;font-weight:normal;font-style:italic;text-align:right;-webkit-text-stroke:0.08px #505050;">12/31/1899 7:59:58 AM</div><div class="t" style="right:502.06000000000006px;top:420.90px;font-size:7px;color:#505050;font-weight:normal;font-style:italic;text-align:right;-webkit-text-stroke:0.08px #505050;">20</div><div class="t" style="right:403.4000000000001px;top:420.90px;font-size:7px;color:#505050;font-weight:normal;font-style:italic;text-align:right;-webkit-text-stroke:0.08px #505050;">5</div><div class="t" style="left:625.3px;top:420.90px;font-size:7px;color:#505050;font-weight:normal;font-style:normal;-webkit-text-stroke:0.08px #505050;">Lower Moonhotton</div><div class="t" style="right:206.08000000000004px;top:420.90px;font-size:7px;color:#505050;font-weight:normal;font-style:italic;text-align:right;-webkit-text-stroke:0.08px #505050;">47</div><div class="t" style="left:822.62px;top:420.90px;font-size:7px;color:#505050;font-weight:normal;font-style:normal;-webkit-text-stroke:0.08px #505050;">Tea</div><div class="t" style="left:921.28px;top:420.90px;font-size:7px;color:#505050;font-weight:normal;font-style:normal;-webkit-text-stroke:0.08px #505050;">Brewed Green tea</div><div class="ab" style="left:1005px;top:224px;width:10.5px;height:209.5px;background:#f4f2f3"></div><div class="ab" style="left:1005.8px;top:244.8px;width:8.9px;height:47.5px;background:#c6c6c6"></div><svg class="ab" style="left:1005.3px;top:232.5px" width="10" height="8" viewBox="0 0 10 8"><path d="M1.5 6 L5 2.4 L8.5 6" fill="none" stroke="#444" stroke-width="1.4"/></svg><svg class="ab" style="left:1005.3px;top:406px" width="10" height="8" viewBox="0 0 10 8"><path d="M1.5 2 L5 5.6 L8.5 2" fill="none" stroke="#444" stroke-width="1.4"/></svg><div class="ab" style="left:129.5px;top:423.5px;width:876px;height:10px;background:#f4f2f3"></div><div class="ab" style="left:151px;top:423.8px;width:488.7px;height:8.9px;background:#c6c6c6"></div><svg class="ab" style="left:139.5px;top:424px" width="8" height="9" viewBox="0 0 8 9"><path d="M5.8 1.3 L2.6 4.5 L5.8 7.7" fill="none" stroke="#444" stroke-width="1.4"/></svg><svg class="ab" style="left:988px;top:424px" width="8" height="9" viewBox="0 0 8 9"><path d="M2.2 1.3 L5.4 4.5 L2.2 7.7" fill="none" stroke="#444" stroke-width="1.4"/></svg><div class="ab" style="left:108.5px;top:435.3px;width:909px;height:1px;background:#e6e6e6"></div><div class="ab" style="left:1018px;top:99px;width:1px;height:517px;background:#e6e6e6"></div><div class="ab" style="left:111.5px;top:438px;width:149px;height:176.5px;border:1px solid #e3e3e3;background:#fff"></div><div class="ab" style="left:112px;top:453.8px;width:148px;height:1px;background:#e6e6e6"></div><div class="t" style="left:118.3px;top:444.35px;font-size:7.3px;color:#3a3a3a;font-weight:bold;font-style:normal;-webkit-text-stroke:0;letter-spacing:-0.05px">Column statistics</div><div class="ab" style="left:245.6px;top:445.8px;width:1.8px;height:1.8px;border-radius:50%;background:#666"></div><div class="ab" style="left:249.9px;top:445.8px;width:1.8px;height:1.8px;border-radius:50%;background:#666"></div><div class="ab" style="left:254.2px;top:445.8px;width:1.8px;height:1.8px;border-radius:50%;background:#666"></div><div class="ab" style="left:0;top:0;width:1024px;height:612px;overflow:hidden"><div class="t" style="left:119.7px;top:462.80px;font-size:7.4px;color:#5c5c5c;font-weight:normal;font-style:normal;">Count</div><div class="t" style="right:784.3px;top:462.80px;font-size:7.4px;color:#5c5c5c;font-weight:normal;font-style:italic;text-align:right;">1000</div><div class="t" style="left:119.7px;top:477.60px;font-size:7.4px;color:#5c5c5c;font-weight:normal;font-style:normal;">Error</div><div class="t" style="right:784.3px;top:477.60px;font-size:7.4px;color:#5c5c5c;font-weight:normal;font-style:italic;text-align:right;">0</div><div class="t" style="left:119.7px;top:492.40px;font-size:7.4px;color:#5c5c5c;font-weight:normal;font-style:normal;">Empty</div><div class="t" style="right:784.3px;top:492.40px;font-size:7.4px;color:#5c5c5c;font-weight:normal;font-style:italic;text-align:right;">0</div><div class="t" style="left:119.7px;top:507.20px;font-size:7.4px;color:#5c5c5c;font-weight:normal;font-style:normal;">Distinct</div><div class="t" style="right:784.3px;top:507.20px;font-size:7.4px;color:#5c5c5c;font-weight:normal;font-style:italic;text-align:right;">997</div><div class="t" style="left:119.7px;top:522.00px;font-size:7.4px;color:#5c5c5c;font-weight:normal;font-style:normal;">Unique</div><div class="t" style="right:784.3px;top:522.00px;font-size:7.4px;color:#5c5c5c;font-weight:normal;font-style:italic;text-align:right;">994</div><div class="t" style="left:119.7px;top:536.80px;font-size:7.4px;color:#5c5c5c;font-weight:normal;font-style:normal;">NaN</div><div class="t" style="right:784.3px;top:536.80px;font-size:7.4px;color:#5c5c5c;font-weight:normal;font-style:italic;text-align:right;">0</div><div class="t" style="left:119.7px;top:551.60px;font-size:7.4px;color:#5c5c5c;font-weight:normal;font-style:normal;">Zero</div><div class="t" style="right:784.3px;top:551.60px;font-size:7.4px;color:#5c5c5c;font-weight:normal;font-style:italic;text-align:right;">0</div><div class="t" style="left:119.7px;top:566.40px;font-size:7.4px;color:#5c5c5c;font-weight:normal;font-style:normal;">Min</div><div class="t" style="right:784.3px;top:566.40px;font-size:7.4px;color:#5c5c5c;font-weight:normal;font-style:italic;text-align:right;">1</div><div class="t" style="left:119.7px;top:581.20px;font-size:7.4px;color:#5c5c5c;font-weight:normal;font-style:normal;">Max</div><div class="t" style="right:784.3px;top:581.20px;font-size:7.4px;color:#5c5c5c;font-weight:normal;font-style:italic;text-align:right;">1000</div><div class="t" style="left:119.7px;top:596.00px;font-size:7.4px;color:#5c5c5c;font-weight:normal;font-style:normal;">Average</div><div class="t" style="right:784.3px;top:596.00px;font-size:7.4px;color:#5c5c5c;font-weight:normal;font-style:italic;text-align:right;">500.497</div><div class="t" style="left:119.7px;top:610.80px;font-size:7.4px;color:#5c5c5c;font-weight:normal;font-style:normal;">Standard deviation</div><div class="t" style="right:784.3px;top:610.80px;font-size:7.4px;color:#5c5c5c;font-weight:normal;font-style:italic;text-align:right;">288.882</div></div><div class="ab" style="left:247px;top:458.5px;width:10px;height:153.5px;background:#f4f2f3"></div><div class="ab" style="left:248.5px;top:479px;width:8px;height:90px;background:#c2c2c2"></div><svg class="ab" style="left:247px;top:468px" width="10" height="8" viewBox="0 0 10 8"><path d="M1.5 5.6 L5 2 L8.5 5.6" fill="none" stroke="#444" stroke-width="1.3"/></svg><svg class="ab" style="left:247px;top:595px" width="10" height="8" viewBox="0 0 10 8"><path d="M1.5 2 L5 5.6 L8.5 2" fill="none" stroke="#444" stroke-width="1.3"/></svg><div class="ab" style="left:263px;top:438px;width:753px;height:176.5px;border:1px solid #e3e3e3;background:#fff"></div><div class="ab" style="left:264px;top:453.8px;width:751px;height:1px;background:#e6e6e6"></div><div class="t" style="left:270.1px;top:444.35px;font-size:7.3px;color:#3a3a3a;font-weight:bold;font-style:normal;-webkit-text-stroke:0;letter-spacing:-0.05px">Value distribution</div><div class="ab" style="left:999.2px;top:445.8px;width:1.8px;height:1.8px;border-radius:50%;background:#666"></div><div class="ab" style="left:1003.6px;top:445.8px;width:1.8px;height:1.8px;border-radius:50%;background:#666"></div><div class="ab" style="left:1008.0px;top:445.8px;width:1.8px;height:1.8px;border-radius:50%;background:#666"></div><div class="ab" style="left:270.30px;top:460px;width:10.8px;height:127.70px;background:#01b8aa"></div><div class="t" style="left:245.70px;top:617.60px;width:60px;height:6px;font-size:6.3px;color:#5a5a5a;text-align:right;-webkit-text-stroke:0.05px #5a5a5a;transform:rotate(-90deg);transform-origin:30px 3px">367</div><div class="ab" style="left:283.87px;top:460px;width:10.8px;height:127.70px;background:#01b8aa"></div><div class="t" style="left:259.26px;top:617.60px;width:60px;height:6px;font-size:6.3px;color:#5a5a5a;text-align:right;-webkit-text-stroke:0.05px #5a5a5a;transform:rotate(-90deg);transform-origin:30px 3px">50</div><div class="ab" style="left:297.43px;top:460px;width:10.8px;height:127.70px;background:#01b8aa"></div><div class="t" style="left:272.83px;top:617.60px;width:60px;height:6px;font-size:6.3px;color:#5a5a5a;text-align:right;-webkit-text-stroke:0.05px #5a5a5a;transform:rotate(-90deg);transform-origin:30px 3px">129</div><div class="ab" style="left:311.00px;top:523.7px;width:10.8px;height:64.00px;background:#01b8aa"></div><div class="t" style="left:286.39px;top:617.60px;width:60px;height:6px;font-size:6.3px;color:#5a5a5a;text-align:right;-webkit-text-stroke:0.05px #5a5a5a;transform:rotate(-90deg);transform-origin:30px 3px">7</div><div class="ab" style="left:324.56px;top:523.7px;width:10.8px;height:64.00px;background:#01b8aa"></div><div class="t" style="left:299.96px;top:617.60px;width:60px;height:6px;font-size:6.3px;color:#5a5a5a;text-align:right;-webkit-text-stroke:0.05px #5a5a5a;transform:rotate(-90deg);transform-origin:30px 3px">6</div><div class="ab" style="left:338.12px;top:523.7px;width:10.8px;height:64.00px;background:#01b8aa"></div><div class="t" style="left:313.52px;top:617.60px;width:60px;height:6px;font-size:6.3px;color:#5a5a5a;text-align:right;-webkit-text-stroke:0.05px #5a5a5a;transform:rotate(-90deg);transform-origin:30px 3px">3</div><div class="ab" style="left:351.69px;top:523.7px;width:10.8px;height:64.00px;background:#01b8aa"></div><div class="t" style="left:327.09px;top:617.60px;width:60px;height:6px;font-size:6.3px;color:#5a5a5a;text-align:right;-webkit-text-stroke:0.05px #5a5a5a;transform:rotate(-90deg);transform-origin:30px 3px">11</div><div class="ab" style="left:365.25px;top:523.7px;width:10.8px;height:64.00px;background:#01b8aa"></div><div class="t" style="left:340.65px;top:617.60px;width:60px;height:6px;font-size:6.3px;color:#5a5a5a;text-align:right;-webkit-text-stroke:0.05px #5a5a5a;transform:rotate(-90deg);transform-origin:30px 3px">12</div><div class="ab" style="left:378.82px;top:523.7px;width:10.8px;height:64.00px;background:#01b8aa"></div><div class="t" style="left:354.22px;top:617.60px;width:60px;height:6px;font-size:6.3px;color:#5a5a5a;text-align:right;-webkit-text-stroke:0.05px #5a5a5a;transform:rotate(-90deg);transform-origin:30px 3px">13</div><div class="ab" style="left:392.38px;top:523.7px;width:10.8px;height:64.00px;background:#01b8aa"></div><div class="t" style="left:367.78px;top:617.60px;width:60px;height:6px;font-size:6.3px;color:#5a5a5a;text-align:right;-webkit-text-stroke:0.05px #5a5a5a;transform:rotate(-90deg);transform-origin:30px 3px">14</div><div class="ab" style="left:405.95px;top:523.7px;width:10.8px;height:64.00px;background:#01b8aa"></div><div class="t" style="left:381.35px;top:617.60px;width:60px;height:6px;font-size:6.3px;color:#5a5a5a;text-align:right;-webkit-text-stroke:0.05px #5a5a5a;transform:rotate(-90deg);transform-origin:30px 3px">15</div><div class="ab" style="left:419.51px;top:523.7px;width:10.8px;height:64.00px;background:#01b8aa"></div><div class="t" style="left:394.91px;top:617.60px;width:60px;height:6px;font-size:6.3px;color:#5a5a5a;text-align:right;-webkit-text-stroke:0.05px #5a5a5a;transform:rotate(-90deg);transform-origin:30px 3px">10</div><div class="ab" style="left:433.08px;top:523.7px;width:10.8px;height:64.00px;background:#01b8aa"></div><div class="t" style="left:408.48px;top:617.60px;width:60px;height:6px;font-size:6.3px;color:#5a5a5a;text-align:right;-webkit-text-stroke:0.05px #5a5a5a;transform:rotate(-90deg);transform-origin:30px 3px">5</div><div class="ab" style="left:446.64px;top:523.7px;width:10.8px;height:64.00px;background:#01b8aa"></div><div class="t" style="left:422.04px;top:617.60px;width:60px;height:6px;font-size:6.3px;color:#5a5a5a;text-align:right;-webkit-text-stroke:0.05px #5a5a5a;transform:rotate(-90deg);transform-origin:30px 3px">19</div><div class="ab" style="left:460.21px;top:523.7px;width:10.8px;height:64.00px;background:#01b8aa"></div><div class="t" style="left:435.61px;top:617.60px;width:60px;height:6px;font-size:6.3px;color:#5a5a5a;text-align:right;-webkit-text-stroke:0.05px #5a5a5a;transform:rotate(-90deg);transform-origin:30px 3px">20</div><div class="ab" style="left:473.77px;top:523.7px;width:10.8px;height:64.00px;background:#01b8aa"></div><div class="t" style="left:449.17px;top:617.60px;width:60px;height:6px;font-size:6.3px;color:#5a5a5a;text-align:right;-webkit-text-stroke:0.05px #5a5a5a;transform:rotate(-90deg);transform-origin:30px 3px">21</div><div class="ab" style="left:487.34px;top:523.7px;width:10.8px;height:64.00px;background:#01b8aa"></div><div class="t" style="left:462.74px;top:617.60px;width:60px;height:6px;font-size:6.3px;color:#5a5a5a;text-align:right;-webkit-text-stroke:0.05px #5a5a5a;transform:rotate(-90deg);transform-origin:30px 3px">22</div><div class="ab" style="left:500.90px;top:523.7px;width:10.8px;height:64.00px;background:#01b8aa"></div><div class="t" style="left:476.30px;top:617.60px;width:60px;height:6px;font-size:6.3px;color:#5a5a5a;text-align:right;-webkit-text-stroke:0.05px #5a5a5a;transform:rotate(-90deg);transform-origin:30px 3px">23</div><div class="ab" style="left:514.47px;top:523.7px;width:10.8px;height:64.00px;background:#01b8aa"></div><div class="t" style="left:489.87px;top:617.60px;width:60px;height:6px;font-size:6.3px;color:#5a5a5a;text-align:right;-webkit-text-stroke:0.05px #5a5a5a;transform:rotate(-90deg);transform-origin:30px 3px">24</div><div class="ab" style="left:528.04px;top:523.7px;width:10.8px;height:64.00px;background:#01b8aa"></div><div class="t" style="left:503.44px;top:617.60px;width:60px;height:6px;font-size:6.3px;color:#5a5a5a;text-align:right;-webkit-text-stroke:0.05px #5a5a5a;transform:rotate(-90deg);transform-origin:30px 3px">25</div><div class="ab" style="left:541.60px;top:523.7px;width:10.8px;height:64.00px;background:#01b8aa"></div><div class="t" style="left:517.00px;top:617.60px;width:60px;height:6px;font-size:6.3px;color:#5a5a5a;text-align:right;-webkit-text-stroke:0.05px #5a5a5a;transform:rotate(-90deg);transform-origin:30px 3px">26</div><div class="ab" style="left:555.16px;top:523.7px;width:10.8px;height:64.00px;background:#01b8aa"></div><div class="t" style="left:530.56px;top:617.60px;width:60px;height:6px;font-size:6.3px;color:#5a5a5a;text-align:right;-webkit-text-stroke:0.05px #5a5a5a;transform:rotate(-90deg);transform-origin:30px 3px">27</div><div class="ab" style="left:568.73px;top:523.7px;width:10.8px;height:64.00px;background:#01b8aa"></div><div class="t" style="left:544.13px;top:617.60px;width:60px;height:6px;font-size:6.3px;color:#5a5a5a;text-align:right;-webkit-text-stroke:0.05px #5a5a5a;transform:rotate(-90deg);transform-origin:30px 3px">28</div><div class="ab" style="left:582.30px;top:523.7px;width:10.8px;height:64.00px;background:#01b8aa"></div><div class="t" style="left:557.70px;top:617.60px;width:60px;height:6px;font-size:6.3px;color:#5a5a5a;text-align:right;-webkit-text-stroke:0.05px #5a5a5a;transform:rotate(-90deg);transform-origin:30px 3px">29</div><div class="ab" style="left:595.86px;top:523.7px;width:10.8px;height:64.00px;background:#01b8aa"></div><div class="t" style="left:571.26px;top:617.60px;width:60px;height:6px;font-size:6.3px;color:#5a5a5a;text-align:right;-webkit-text-stroke:0.05px #5a5a5a;transform:rotate(-90deg);transform-origin:30px 3px">30</div><div class="ab" style="left:609.42px;top:523.7px;width:10.8px;height:64.00px;background:#01b8aa"></div><div class="t" style="left:584.82px;top:617.60px;width:60px;height:6px;font-size:6.3px;color:#5a5a5a;text-align:right;-webkit-text-stroke:0.05px #5a5a5a;transform:rotate(-90deg);transform-origin:30px 3px">31</div><div class="ab" style="left:622.99px;top:523.7px;width:10.8px;height:64.00px;background:#01b8aa"></div><div class="t" style="left:598.39px;top:617.60px;width:60px;height:6px;font-size:6.3px;color:#5a5a5a;text-align:right;-webkit-text-stroke:0.05px #5a5a5a;transform:rotate(-90deg);transform-origin:30px 3px">18</div><div class="ab" style="left:636.56px;top:523.7px;width:10.8px;height:64.00px;background:#01b8aa"></div><div class="t" style="left:611.96px;top:617.60px;width:60px;height:6px;font-size:6.3px;color:#5a5a5a;text-align:right;-webkit-text-stroke:0.05px #5a5a5a;transform:rotate(-90deg);transform-origin:30px 3px">9</div><div class="ab" style="left:650.12px;top:523.7px;width:10.8px;height:64.00px;background:#01b8aa"></div><div class="t" style="left:625.52px;top:617.60px;width:60px;height:6px;font-size:6.3px;color:#5a5a5a;text-align:right;-webkit-text-stroke:0.05px #5a5a5a;transform:rotate(-90deg);transform-origin:30px 3px">35</div><div class="ab" style="left:663.68px;top:523.7px;width:10.8px;height:64.00px;background:#01b8aa"></div><div class="t" style="left:639.08px;top:617.60px;width:60px;height:6px;font-size:6.3px;color:#5a5a5a;text-align:right;-webkit-text-stroke:0.05px #5a5a5a;transform:rotate(-90deg);transform-origin:30px 3px">36</div><div class="ab" style="left:677.25px;top:523.7px;width:10.8px;height:64.00px;background:#01b8aa"></div><div class="t" style="left:652.65px;top:617.60px;width:60px;height:6px;font-size:6.3px;color:#5a5a5a;text-align:right;-webkit-text-stroke:0.05px #5a5a5a;transform:rotate(-90deg);transform-origin:30px 3px">37</div><div class="ab" style="left:690.82px;top:523.7px;width:10.8px;height:64.00px;background:#01b8aa"></div><div class="t" style="left:666.22px;top:617.60px;width:60px;height:6px;font-size:6.3px;color:#5a5a5a;text-align:right;-webkit-text-stroke:0.05px #5a5a5a;transform:rotate(-90deg);transform-origin:30px 3px">38</div><div class="ab" style="left:704.38px;top:523.7px;width:10.8px;height:64.00px;background:#01b8aa"></div><div class="t" style="left:679.78px;top:617.60px;width:60px;height:6px;font-size:6.3px;color:#5a5a5a;text-align:right;-webkit-text-stroke:0.05px #5a5a5a;transform:rotate(-90deg);transform-origin:30px 3px">39</div><div class="ab" style="left:717.94px;top:523.7px;width:10.8px;height:64.00px;background:#01b8aa"></div><div class="t" style="left:693.34px;top:617.60px;width:60px;height:6px;font-size:6.3px;color:#5a5a5a;text-align:right;-webkit-text-stroke:0.05px #5a5a5a;transform:rotate(-90deg);transform-origin:30px 3px">40</div><div class="ab" style="left:731.51px;top:523.7px;width:10.8px;height:64.00px;background:#01b8aa"></div><div class="t" style="left:706.91px;top:617.60px;width:60px;height:6px;font-size:6.3px;color:#5a5a5a;text-align:right;-webkit-text-stroke:0.05px #5a5a5a;transform:rotate(-90deg);transform-origin:30px 3px">41</div><div class="ab" style="left:745.08px;top:523.7px;width:10.8px;height:64.00px;background:#01b8aa"></div><div class="t" style="left:720.48px;top:617.60px;width:60px;height:6px;font-size:6.3px;color:#5a5a5a;text-align:right;-webkit-text-stroke:0.05px #5a5a5a;transform:rotate(-90deg);transform-origin:30px 3px">42</div><div class="ab" style="left:758.64px;top:523.7px;width:10.8px;height:64.00px;background:#01b8aa"></div><div class="t" style="left:734.04px;top:617.60px;width:60px;height:6px;font-size:6.3px;color:#5a5a5a;text-align:right;-webkit-text-stroke:0.05px #5a5a5a;transform:rotate(-90deg);transform-origin:30px 3px">43</div><div class="ab" style="left:772.20px;top:523.7px;width:10.8px;height:64.00px;background:#01b8aa"></div><div class="t" style="left:747.60px;top:617.60px;width:60px;height:6px;font-size:6.3px;color:#5a5a5a;text-align:right;-webkit-text-stroke:0.05px #5a5a5a;transform:rotate(-90deg);transform-origin:30px 3px">44</div><div class="ab" style="left:785.77px;top:523.7px;width:10.8px;height:64.00px;background:#01b8aa"></div><div class="t" style="left:761.17px;top:617.60px;width:60px;height:6px;font-size:6.3px;color:#5a5a5a;text-align:right;-webkit-text-stroke:0.05px #5a5a5a;transform:rotate(-90deg);transform-origin:30px 3px">45</div><div class="ab" style="left:799.34px;top:523.7px;width:10.8px;height:64.00px;background:#01b8aa"></div><div class="t" style="left:774.74px;top:617.60px;width:60px;height:6px;font-size:6.3px;color:#5a5a5a;text-align:right;-webkit-text-stroke:0.05px #5a5a5a;transform:rotate(-90deg);transform-origin:30px 3px">46</div><div class="ab" style="left:812.90px;top:523.7px;width:10.8px;height:64.00px;background:#01b8aa"></div><div class="t" style="left:788.30px;top:617.60px;width:60px;height:6px;font-size:6.3px;color:#5a5a5a;text-align:right;-webkit-text-stroke:0.05px #5a5a5a;transform:rotate(-90deg);transform-origin:30px 3px">47</div><div class="ab" style="left:826.46px;top:523.7px;width:10.8px;height:64.00px;background:#01b8aa"></div><div class="t" style="left:801.86px;top:617.60px;width:60px;height:6px;font-size:6.3px;color:#5a5a5a;text-align:right;-webkit-text-stroke:0.05px #5a5a5a;transform:rotate(-90deg);transform-origin:30px 3px">48</div><div class="ab" style="left:840.03px;top:523.7px;width:10.8px;height:64.00px;background:#01b8aa"></div><div class="t" style="left:815.43px;top:617.60px;width:60px;height:6px;font-size:6.3px;color:#5a5a5a;text-align:right;-webkit-text-stroke:0.05px #5a5a5a;transform:rotate(-90deg);transform-origin:30px 3px">49</div><div class="ab" style="left:853.60px;top:523.7px;width:10.8px;height:64.00px;background:#01b8aa"></div><div class="t" style="left:829.00px;top:617.60px;width:60px;height:6px;font-size:6.3px;color:#5a5a5a;text-align:right;-webkit-text-stroke:0.05px #5a5a5a;transform:rotate(-90deg);transform-origin:30px 3px">34</div><div class="ab" style="left:867.16px;top:523.7px;width:10.8px;height:64.00px;background:#01b8aa"></div><div class="t" style="left:842.56px;top:617.60px;width:60px;height:6px;font-size:6.3px;color:#5a5a5a;text-align:right;-webkit-text-stroke:0.05px #5a5a5a;transform:rotate(-90deg);transform-origin:30px 3px">17</div><div class="ab" style="left:880.72px;top:523.7px;width:10.8px;height:64.00px;background:#01b8aa"></div><div class="t" style="left:856.12px;top:617.60px;width:60px;height:6px;font-size:6.3px;color:#5a5a5a;text-align:right;-webkit-text-stroke:0.05px #5a5a5a;transform:rotate(-90deg);transform-origin:30px 3px">1000</div><div class="ab" style="left:894.29px;top:523.7px;width:10.8px;height:64.00px;background:#01b8aa"></div><div class="t" style="left:869.69px;top:617.60px;width:60px;height:6px;font-size:6.3px;color:#5a5a5a;text-align:right;-webkit-text-stroke:0.05px #5a5a5a;transform:rotate(-90deg);transform-origin:30px 3px">999</div><div class="ab" style="left:907.86px;top:523.7px;width:10.8px;height:64.00px;background:#01b8aa"></div><div class="t" style="left:883.25px;top:617.60px;width:60px;height:6px;font-size:6.3px;color:#5a5a5a;text-align:right;-webkit-text-stroke:0.05px #5a5a5a;transform:rotate(-90deg);transform-origin:30px 3px">998</div><div class="ab" style="left:921.42px;top:523.7px;width:10.8px;height:64.00px;background:#01b8aa"></div><div class="t" style="left:896.82px;top:617.60px;width:60px;height:6px;font-size:6.3px;color:#5a5a5a;text-align:right;-webkit-text-stroke:0.05px #5a5a5a;transform:rotate(-90deg);transform-origin:30px 3px">997</div><div class="ab" style="left:934.98px;top:523.7px;width:10.8px;height:64.00px;background:#01b8aa"></div><div class="t" style="left:910.38px;top:617.60px;width:60px;height:6px;font-size:6.3px;color:#5a5a5a;text-align:right;-webkit-text-stroke:0.05px #5a5a5a;transform:rotate(-90deg);transform-origin:30px 3px">996</div><svg class="ab" style="left:0;top:0" width="1024" height="616" viewBox="0 0 1024 616"><path d="M251.50 11.20 C250.63 10.58 249.45 8.88 246.30 7.50 C243.15 6.12 238.32 3.95 232.60 2.90 C226.88 1.85 219.98 1.55 212.00 1.20 C204.02 0.85 193.80 0.80 184.70 0.80 C175.60 0.80 164.23 0.88 157.40 1.20 C150.57 1.52 148.27 2.13 143.70 2.70 C139.13 3.27 133.70 3.98 130.00 4.60 C126.30 5.22 124.57 5.37 121.50 6.40 C118.43 7.43 114.47 8.85 111.60 10.80 C108.73 12.75 106.60 15.12 104.30 18.10 C102.00 21.08 99.42 25.58 97.80 28.70 C96.18 31.82 95.82 33.83 94.60 36.80 C93.38 39.77 91.73 42.85 90.50 46.50 C89.27 50.15 87.90 54.78 87.20 58.70 C86.50 62.62 86.25 67.13 86.30 70.00 C86.35 72.87 86.90 73.95 87.50 75.90 C88.10 77.85 88.73 79.85 89.90 81.70 C91.07 83.55 92.55 85.53 94.50 87.00 C96.45 88.47 98.95 89.53 101.60 90.50 C104.25 91.47 107.48 92.22 110.40 92.85 C113.32 93.48 115.68 93.91 119.10 94.30 C122.52 94.69 126.75 95.02 130.90 95.20 C135.05 95.38 138.32 95.28 144.00 95.40 C149.68 95.52 157.33 95.77 165.00 95.90 C172.67 96.03 184.04 96.46 190.00 96.20 C195.96 95.94 197.17 95.28 200.75 94.35 C204.33 93.42 207.91 92.03 211.50 90.60 C215.09 89.17 218.72 87.25 222.30 85.75 C225.88 84.25 229.38 82.96 233.00 81.60 C236.62 80.24 241.13 78.78 244.00 77.60 C246.87 76.42 248.30 75.90 250.20 74.50 C252.10 73.10 254.05 71.10 255.40 69.20 C256.75 67.30 257.57 65.30 258.30 63.10 C259.03 60.90 259.40 58.42 259.80 56.00 C260.20 53.58 260.28 51.87 260.70 48.60 C261.12 45.33 261.97 40.47 262.30 36.40 C262.63 32.33 262.70 27.58 262.70 24.20 C262.70 20.82 262.63 17.98 262.30 16.10 C261.97 14.22 261.72 13.64 260.70 12.90 C259.68 12.16 257.62 11.72 256.20 11.65 C254.78 11.58 252.87 12.36 252.20 12.50" fill="none" stroke="#0a8049" stroke-width="2.6" stroke-linecap="round" stroke-linejoin="round"/></svg></div></body></html>
